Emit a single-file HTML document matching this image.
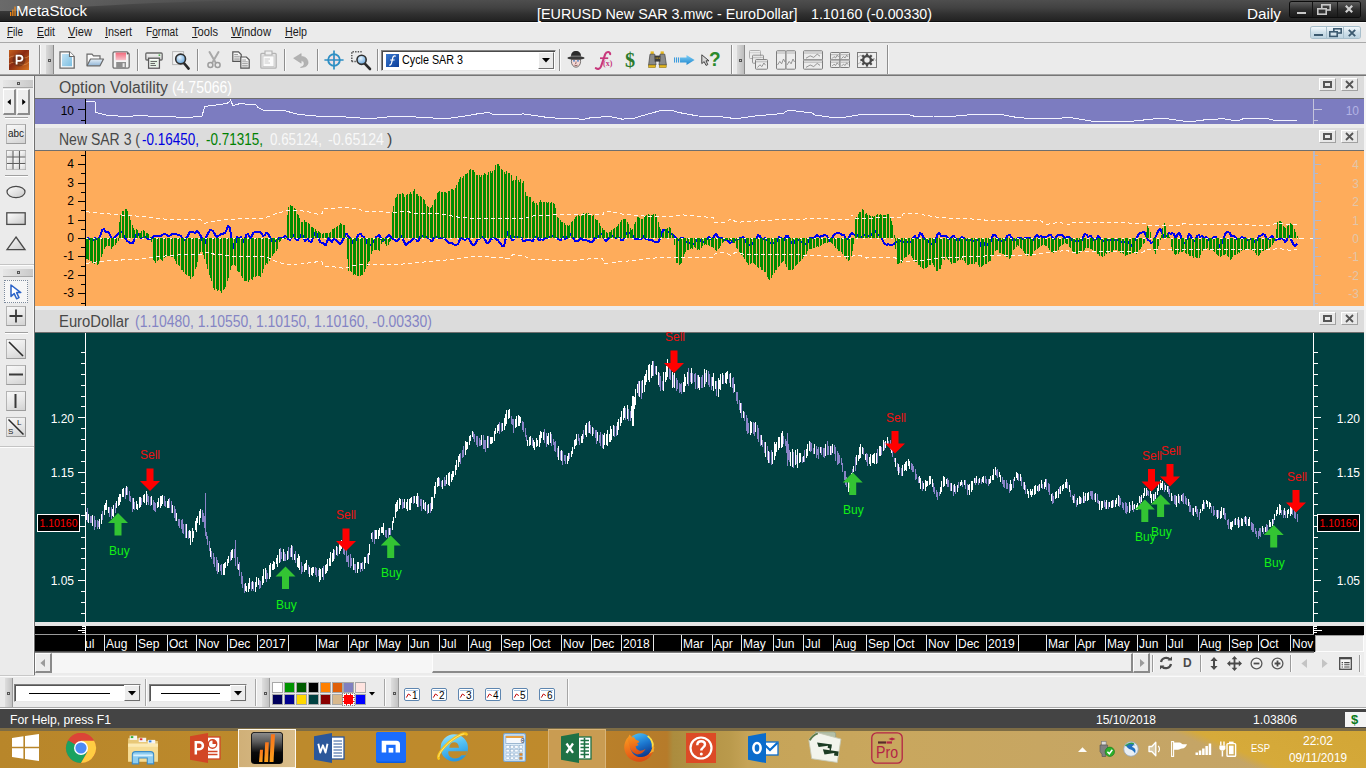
<!DOCTYPE html>
<html><head><meta charset="utf-8"><title>MetaStock</title><style>
html,body{margin:0;padding:0;background:#ebebeb;}
body{width:1366px;height:768px;overflow:hidden;position:relative;font-family:"Liberation Sans",sans-serif;}
.a{position:absolute;}
.t{position:absolute;white-space:nowrap;font-family:"Liberation Sans",sans-serif;}
svg{display:block;overflow:visible}
</style></head><body>
<!-- frame -->
<div class="a" style="left:0;top:0;width:1366px;height:22px;background:linear-gradient(#4e4e4e 0%,#424242 35%,#303030 65%,#202020 100%);"></div>
<svg class="a" style="left:0;top:0" width="260" height="14" viewBox="0 0 260 14"><defs><linearGradient id="gGloss" x1="0" y1="0" x2="1" y2="0"><stop offset="0" stop-color="#6a6a6a"/><stop offset="1" stop-color="#565656" stop-opacity="0.3"/></linearGradient></defs><path d="M0 0H250C150 2 60 8 14 11H0Z" fill="url(#gGloss)"/></svg>
<div class="a" style="left:0px;top:21px;width:1366px;height:1px;background:#0e0e0e;"></div>
<svg class="a" style="left:9.500px;top:6px" width="6" height="10" viewBox="0 0 6 10"><rect x="0" y="6" width="1.300" height="4" fill="#f08a1c"/><rect x="2.200" y="3.500" width="1.300" height="6.500" fill="#f08a1c"/><rect x="4.400" y="0.500" width="1.300" height="9.500" fill="#f08a1c"/></svg>
<div class="t" style="left:15.5px;top:1px;font-size:15.5px;line-height:20px;color:#fff;transform:scaleX(0.9696);transform-origin:0 0;">MetaStock</div>
<div class="t" style="left:537px;top:4px;font-size:15px;line-height:20px;color:#fff;transform:scaleX(0.9557);transform-origin:0 0;">[EURUSD New SAR 3.mwc - EuroDollar]</div>
<div class="t" style="left:811px;top:4px;font-size:15px;line-height:20px;color:#fff;transform:scaleX(0.9483);transform-origin:0 0;">1.10160 (-0.00330)</div>
<div class="t" style="left:1247px;top:4px;font-size:15px;line-height:20px;color:#fff;transform:scaleX(1.0198);transform-origin:0 0;">Daily</div>
<div class="a" style="left:1290px;top:2px;width:70px;height:15px;border-radius:2px;background:linear-gradient(#5a5a5a,#2c2c2c 55%,#1a1a1a);box-shadow:0 0 0 1px #0c0c0c"></div>
<div class="a" style="left:1312px;top:2px;width:1px;height:15px;background:#151515;"></div>
<div class="a" style="left:1337px;top:2px;width:1px;height:15px;background:#151515;"></div>
<div class="a" style="left:1297px;top:12px;width:9px;height:2px;background:#c8c8c8;"></div>
<svg class="a" style="left:1317px;top:4px" width="14" height="12" viewBox="0 0 14 12" fill="none" stroke="#c8c8c8" stroke-width="1.6"><rect x="4.8" y="0.8" width="8.4" height="5.2"/><rect x="0.8" y="4.8" width="8.4" height="5.4" fill="#333"/></svg>
<svg class="a" style="left:1345px;top:5px" width="8" height="8" viewBox="0 0 8 8" stroke="#d0d0d0" stroke-width="2.2"><path d="M0.800 0.800L7.200 7.200M7.200 0.800L0.800 7.200"/></svg>
<div class="a" style="left:0px;top:22px;width:1366px;height:21px;background:#ebebeb;"></div>
<div class="a" style="left:0px;top:22px;width:1366px;height:1px;background:#f8f8f8;"></div>
<div class="a" style="left:0px;top:42px;width:1366px;height:1px;background:#a9a9a9;"></div>
<div class="t" style="left:7px;top:25px;font-size:12px;line-height:15px;color:#1a1a1a;transform:scaleX(0.8274);transform-origin:0 0"><u>F</u>ile</div>
<div class="t" style="left:37px;top:25px;font-size:12px;line-height:15px;color:#1a1a1a;transform:scaleX(0.8705);transform-origin:0 0"><u>E</u>dit</div>
<div class="t" style="left:68px;top:25px;font-size:12px;line-height:15px;color:#1a1a1a;transform:scaleX(0.9304);transform-origin:0 0"><u>V</u>iew</div>
<div class="t" style="left:105px;top:25px;font-size:12px;line-height:15px;color:#1a1a1a;transform:scaleX(0.8996);transform-origin:0 0"><u>I</u>nsert</div>
<div class="t" style="left:146px;top:25px;font-size:12px;line-height:15px;color:#1a1a1a;transform:scaleX(0.8420);transform-origin:0 0">F<u>o</u>rmat</div>
<div class="t" style="left:192px;top:25px;font-size:12px;line-height:15px;color:#1a1a1a;transform:scaleX(0.9281);transform-origin:0 0"><u>T</u>ools</div>
<div class="t" style="left:231px;top:25px;font-size:12px;line-height:15px;color:#1a1a1a;transform:scaleX(0.9372);transform-origin:0 0"><u>W</u>indow</div>
<div class="t" style="left:285px;top:25px;font-size:12px;line-height:15px;color:#1a1a1a;transform:scaleX(0.8914);transform-origin:0 0"><u>H</u>elp</div>
<div class="a" style="left:1311px;top:27px;width:49px;height:11px;border-radius:2px;background:linear-gradient(#f4f9fc,#cfe0ea 50%,#bcd3e0);box-shadow:0 0 0 1px #a8bfcc"></div>
<div class="a" style="left:1326px;top:27px;width:1px;height:11px;background:#a8bfcc;"></div>
<div class="a" style="left:1343px;top:27px;width:1px;height:11px;background:#a8bfcc;"></div>
<div class="a" style="left:1314px;top:34px;width:9px;height:2px;background:#3c5a70;"></div>
<svg class="a" style="left:1329px;top:28px" width="13" height="10" viewBox="0 0 13 10" fill="none" stroke="#3c5a70" stroke-width="1.6"><rect x="4.8" y="0.8" width="7.4" height="4.2"/><rect x="0.8" y="3.8" width="7.4" height="4.6" fill="#d5e4ed"/></svg>
<svg class="a" style="left:1348px;top:29px" width="8" height="8" viewBox="0 0 8 8" stroke="#3c5a70" stroke-width="1.9"><path d="M0.8 0.8L7.2 7.2M7.2 0.8L0.8 7.2"/></svg>
<div class="a" style="left:0px;top:43px;width:1366px;height:32px;background:#ebebeb;"></div>
<div class="a" style="left:0px;top:74px;width:1366px;height:1px;background:#a4a4a4;"></div>
<div class="a" style="left:0px;top:75px;width:1366px;height:1px;background:#767676;"></div>
<!-- panes -->
<div class="a" style="left:35px;top:76px;width:1330px;height:600px;background:#e8e8e8;"></div>
<div class="a" style="left:34px;top:76px;width:1px;height:600px;background:#707070;"></div>
<div class="a" style="left:1364px;top:76px;width:2px;height:600px;background:#f4f4f4;"></div>
<div class="a" style="left:35px;top:76px;width:1329px;height:22px;background:#dcdcdc;"></div>
<div class="a" style="left:35px;top:98px;width:1329px;height:1px;background:#6e6e6e;"></div>
<div class="a" style="left:35px;top:99px;width:1329px;height:25px;background:#7c7cc0;"></div>
<div class="t" style="left:59px;top:77.5px;font-size:16px;line-height:19px;color:#484848;transform:scaleX(0.9884);transform-origin:0 0;">Option Volatility</div>
<div class="t" style="left:172px;top:77.5px;font-size:16px;line-height:19px;color:#ffffff;transform:scaleX(0.8760);transform-origin:0 0;">(4.75066)</div>
<div class="a" style="left:1319px;top:78px;width:17px;height:13px;background:#e8e8e8;border:1px solid #fff;border-right-color:#a0a0a0;border-bottom-color:#a0a0a0;box-sizing:border-box"></div><div class="a" style="left:1323px;top:81px;width:9px;height:7px;border:2px solid #555;box-sizing:border-box"></div><div class="a" style="left:1341px;top:78px;width:17px;height:13px;background:#e8e8e8;border:1px solid #fff;border-right-color:#a0a0a0;border-bottom-color:#a0a0a0;box-sizing:border-box"></div><svg class="a" style="left:1345px;top:80px" width="9" height="9" viewBox="0 0 9 9" stroke="#555" stroke-width="1.8"><path d="M1 1L8 8M8 1L1 8"/></svg>
<div class="a" style="left:35px;top:124px;width:1329px;height:4px;background:#ececec;"></div>
<div class="a" style="left:35px;top:128px;width:1329px;height:22px;background:#dcdcdc;"></div>
<div class="a" style="left:35px;top:150px;width:1329px;height:1px;background:#6e6e6e;"></div>
<div class="a" style="left:35px;top:151px;width:1329px;height:155px;background:#feac5b;"></div>
<div class="a" style="left:1319px;top:130px;width:17px;height:13px;background:#e8e8e8;border:1px solid #fff;border-right-color:#a0a0a0;border-bottom-color:#a0a0a0;box-sizing:border-box"></div><div class="a" style="left:1323px;top:133px;width:9px;height:7px;border:2px solid #555;box-sizing:border-box"></div><div class="a" style="left:1341px;top:130px;width:17px;height:13px;background:#e8e8e8;border:1px solid #fff;border-right-color:#a0a0a0;border-bottom-color:#a0a0a0;box-sizing:border-box"></div><svg class="a" style="left:1345px;top:132px" width="9" height="9" viewBox="0 0 9 9" stroke="#555" stroke-width="1.8"><path d="M1 1L8 8M8 1L1 8"/></svg>
<div class="a" style="left:35px;top:306px;width:1329px;height:4px;background:#ececec;"></div>
<div class="a" style="left:35px;top:310px;width:1329px;height:22px;background:#dcdcdc;"></div>
<div class="a" style="left:35px;top:332px;width:1329px;height:1px;background:#6e6e6e;"></div>
<div class="a" style="left:35px;top:333px;width:1329px;height:289px;background:#004040;"></div>
<div class="a" style="left:1319px;top:312px;width:17px;height:13px;background:#e8e8e8;border:1px solid #fff;border-right-color:#a0a0a0;border-bottom-color:#a0a0a0;box-sizing:border-box"></div><div class="a" style="left:1323px;top:315px;width:9px;height:7px;border:2px solid #555;box-sizing:border-box"></div><div class="a" style="left:1341px;top:312px;width:17px;height:13px;background:#e8e8e8;border:1px solid #fff;border-right-color:#a0a0a0;border-bottom-color:#a0a0a0;box-sizing:border-box"></div><svg class="a" style="left:1345px;top:314px" width="9" height="9" viewBox="0 0 9 9" stroke="#555" stroke-width="1.8"><path d="M1 1L8 8M8 1L1 8"/></svg>
<div class="a" style="left:35px;top:622px;width:1329px;height:4px;background:#e4e4e4;"></div>
<div class="a" style="left:35px;top:626px;width:1329px;height:26px;background:#000;"></div>
<div class="a" style="left:1315px;top:635px;width:49px;height:17px;box-sizing:border-box;background:#e9e9e9;border:1px solid #9c9c9c;border-right-color:#fdfdfd;border-bottom-color:#fdfdfd"></div>
<div class="a" style="left:35px;top:652px;width:1329px;height:24px;background:#ebebeb;"></div>
<!-- charts -->
<svg class="a" style="left:0;top:0" width="1366" height="768" shape-rendering="crispEdges">
<path d="M86.0 101.0L95.0 102.0L95.8 112.5L105.5 115.0L123.0 116.4L140.6 115.7L158.0 116.4L175.8 117.0L193.4 117.0L202.0 116.0L204.8 106.4L219.8 104.6L228.5 102.8L230.7 100.0L233.0 106.0L235.6 104.6L240.0 103.7L255.8 104.6L257.6 107.0L262.9 110.0L278.7 110.0L285.7 111.0L298.0 114.3L315.6 116.0L345.5 117.0L370.0 118.7L398.0 116.0L415.8 117.0L433.4 118.0L451.0 118.0L465.0 116.0L480.0 113.4L488.8 112.5L492.3 114.3L524.0 114.0L550.0 117.8L583.7 119.2L592.5 117.4L610.0 116.6L622.4 119.2L634.7 118.0L647.0 114.3L659.3 111.0L671.6 110.4L678.7 112.5L698.0 116.0L720.0 116.6L735.8 118.7L755.0 116.0L783.3 113.4L786.8 111.0L793.8 110.4L797.4 111.6L811.4 112.5L815.0 115.0L829.0 117.0L841.3 117.8L860.0 114.6L908.0 114.6L915.5 116.5L934.0 116.0L956.0 116.0L975.0 114.3L1000.7 114.3L1015.5 117.2L1034.0 119.0L1056.0 118.3L1071.0 117.6L1097.0 122.0L1108.0 121.0L1134.0 121.0L1156.0 118.7L1167.0 118.7L1189.6 122.0L1200.7 120.2L1223.0 118.7L1237.8 121.0L1245.0 118.0L1265.5 118.0L1274.8 120.5L1297.0 120.5" stroke="#f4f4ff" stroke-width="1" fill="none"/>
<path d="M86 240L87 240L88 238L90 239L91 241L92 241L94 239L95 238L97 239L98 240L99 238L101 234L102 230L104 229L105 231L106 232L108 232L109 233L111 237L112 239L113 239L115 237L116 236L118 234L119 233L120 231L122 232L123 234L125 238L126 239L127 241L129 242L130 243L132 243L133 243L134 240L136 235L137 233L139 235L140 237L141 238L143 238L144 237L146 237L147 238L148 239L150 239L151 239L153 237L154 236L155 236L157 236L158 236L160 236L161 236L162 235L164 234L165 234L167 235L168 236L169 236L171 235L172 234L174 234L175 234L176 234L178 235L179 235L181 236L182 238L183 240L185 240L186 238L188 236L189 233L190 232L192 232L193 232L195 233L196 232L197 231L199 233L200 235L202 238L203 243L204 246L206 238L207 235L209 232L210 230L211 230L213 231L214 233L216 236L217 237L218 236L220 235L221 234L223 234L224 233L225 233L227 229L228 226L230 228L231 235L232 241L234 248L235 245L237 237L238 238L239 238L241 237L242 239L244 242L245 240L246 235L248 234L249 236L251 238L252 236L253 233L255 232L256 232L258 232L259 232L260 232L262 234L263 236L265 235L266 233L267 233L269 235L270 238L272 241L273 242L274 242L276 241L277 240L279 238L280 238L281 238L283 238L284 237L285 236L287 237L288 239L290 240L291 237L292 235L294 235L295 238L297 240L298 240L299 238L301 235L302 235L304 238L305 241L306 240L308 239L309 241L311 242L312 241L313 236L315 233L316 233L318 236L319 239L320 242L322 243L323 243L325 245L326 245L327 241L329 238L330 240L332 242L333 240L334 239L336 240L337 241L339 243L340 244L341 243L343 240L344 237L346 234L347 234L348 236L350 238L351 240L353 243L354 244L355 242L357 238L358 235L360 234L361 234L362 236L364 237L365 239L367 242L368 245L369 246L371 245L372 243L374 241L375 239L376 237L378 236L379 235L381 238L382 241L383 241L385 240L386 238L388 236L389 235L390 236L392 238L393 239L395 240L396 241L397 241L399 239L400 237L402 236L403 239L404 242L406 245L407 244L409 242L410 242L411 241L413 239L414 238L416 239L417 241L418 241L420 238L421 235L423 236L424 236L425 236L427 237L428 238L430 239L431 241L432 241L434 238L435 237L437 237L438 237L439 238L441 238L442 238L444 238L445 239L446 240L448 242L449 243L451 243L452 243L453 244L455 245L456 245L458 244L459 242L460 239L462 238L463 239L465 240L466 239L467 238L469 239L470 241L472 244L473 245L474 245L476 243L477 240L479 239L480 238L481 237L483 237L484 237L485 240L487 243L488 243L490 241L491 238L492 239L494 238L495 238L497 240L498 240L499 242L501 244L502 246L504 246L505 242L506 237L508 232L509 234L511 238L512 240L513 240L515 237L516 236L518 237L519 236L520 237L522 239L523 241L525 241L526 240L527 240L529 240L530 240L532 241L533 241L534 238L536 237L537 237L539 240L540 240L541 239L543 240L544 239L546 238L547 238L548 238L550 237L551 236L553 236L554 235L555 237L557 238L558 239L560 240L561 240L562 238L564 237L565 239L567 238L568 235L569 233L571 234L572 237L574 239L575 241L576 241L578 241L579 240L581 238L582 239L583 240L585 240L586 240L588 241L589 241L590 242L592 242L593 241L595 238L596 238L597 238L599 236L600 235L602 234L603 235L604 238L606 241L607 240L609 238L610 236L611 235L613 236L614 237L616 238L617 237L618 237L620 238L621 240L623 240L624 238L625 235L627 233L628 233L630 233L631 233L632 235L634 237L635 239L637 239L638 239L639 239L641 239L642 238L644 236L645 238L646 239L648 239L649 240L651 240L652 240L653 241L655 242L656 242L658 242L659 241L660 238L662 233L663 230L665 230L666 232L667 233L669 232L670 233L672 234L673 235L674 236L676 238L677 239L679 240L680 239L681 238L683 238L684 240L685 243L687 242L688 242L690 243L691 244L692 245L694 244L695 242L697 240L698 239L699 239L701 241L702 242L704 242L705 241L706 240L708 238L709 237L711 239L712 240L713 238L715 235L716 234L718 237L719 238L720 238L722 238L723 239L725 240L726 240L727 240L729 242L730 243L732 242L733 239L734 239L736 240L737 240L739 239L740 238L741 238L743 237L744 238L746 241L747 244L748 245L750 245L751 245L753 244L754 241L755 239L757 238L758 235L760 236L761 239L762 240L764 239L765 238L767 239L768 242L769 243L771 243L772 243L774 243L775 243L776 242L778 240L779 237L781 238L782 240L783 241L785 239L786 236L788 236L789 239L790 241L792 243L793 244L795 242L796 239L797 239L799 240L800 242L802 242L803 242L804 243L806 244L807 243L809 240L810 238L811 238L813 238L814 238L816 236L817 235L818 236L820 237L821 236L823 236L824 235L825 235L827 236L828 238L830 241L831 241L832 238L834 235L835 234L837 233L838 233L839 233L841 234L842 235L844 235L845 237L846 239L848 239L849 237L851 234L852 233L853 234L855 235L856 234L858 236L859 237L860 237L862 237L863 235L865 235L866 236L867 236L869 236L870 236L872 234L873 232L874 231L876 231L877 234L879 235L880 235L881 237L883 241L884 243L885 244L887 245L888 244L890 245L891 245L892 245L894 244L895 243L897 242L898 240L899 240L901 241L902 242L904 242L905 241L906 241L908 242L909 242L911 242L912 241L913 238L915 236L916 238L918 238L919 236L920 233L922 234L923 237L925 239L926 239L927 240L929 242L930 244L932 244L933 243L934 243L936 240L937 235L939 233L940 234L941 236L943 236L944 236L946 236L947 237L948 238L950 239L951 238L953 236L954 236L955 238L957 240L958 241L960 239L961 238L962 237L964 238L965 240L967 240L968 239L969 239L971 240L972 241L974 241L975 242L976 241L978 240L979 242L981 245L982 248L983 247L985 243L986 243L988 245L989 246L990 243L992 238L993 235L995 235L996 236L997 238L999 240L1000 241L1002 241L1003 241L1004 241L1006 239L1007 236L1009 235L1010 235L1011 237L1013 240L1014 240L1016 240L1017 239L1018 238L1020 238L1021 238L1023 239L1024 239L1025 238L1027 238L1028 238L1030 238L1031 239L1032 240L1034 240L1035 237L1037 235L1038 236L1039 237L1041 236L1042 237L1044 237L1045 238L1046 237L1048 236L1049 235L1051 235L1052 237L1053 238L1055 239L1056 237L1058 235L1059 235L1060 235L1062 235L1063 236L1065 238L1066 239L1067 237L1069 237L1070 238L1072 239L1073 242L1074 242L1076 241L1077 240L1079 241L1080 242L1081 241L1083 238L1084 235L1085 234L1087 235L1088 237L1090 236L1091 236L1092 238L1094 240L1095 240L1097 238L1098 236L1099 237L1101 239L1102 240L1104 241L1105 242L1106 241L1108 240L1109 240L1111 240L1112 240L1113 240L1115 240L1116 241L1118 240L1119 240L1120 242L1122 242L1123 241L1125 242L1126 242L1127 241L1129 242L1130 246L1132 246L1133 243L1134 241L1136 239L1137 237L1139 234L1140 233L1141 233L1143 232L1144 232L1146 235L1147 238L1148 240L1150 241L1151 243L1153 242L1154 241L1155 238L1157 234L1158 231L1160 229L1161 230L1162 233L1164 237L1165 237L1167 236L1168 234L1169 233L1171 234L1172 233L1174 234L1175 237L1176 237L1178 234L1179 233L1181 236L1182 241L1183 243L1185 243L1186 241L1188 237L1189 234L1190 235L1192 238L1193 240L1195 241L1196 239L1197 236L1199 235L1200 237L1202 236L1203 237L1204 238L1206 237L1207 238L1209 240L1210 240L1211 239L1213 238L1214 237L1216 237L1217 239L1218 244L1220 247L1221 245L1223 241L1224 238L1225 234L1227 232L1228 232L1230 233L1231 236L1232 236L1234 236L1235 237L1237 239L1238 240L1239 239L1241 238L1242 237L1244 238L1245 238L1246 239L1248 240L1249 240L1251 239L1252 239L1253 240L1255 242L1256 241L1258 238L1259 236L1260 236L1262 235L1263 234L1265 235L1266 238L1267 239L1269 239L1270 238L1272 236L1273 237L1274 240L1276 240L1277 239L1279 239L1280 239L1281 238L1283 239L1284 240L1285 242L1287 240L1288 236L1290 236L1291 239L1292 242L1294 245L1295 246L1297 244" stroke="#0000f0" stroke-width="2" fill="none" stroke-linejoin="round"/><path d="M86.5 238V259M87.5 238V259M88.5 238V260M90.5 238V261M91.5 238V261M92.5 238V263M94.5 238V264M95.5 238V263M97.5 238V265M98.5 238V264M99.5 238V261M101.5 238V257M102.5 238V254M104.5 238V249M105.5 238V247M106.5 238V246M108.5 238V246M109.5 238V246M111.5 238V249M112.5 238V247M113.5 238V246M115.5 238V245M116.5 238V243M118.5 238V241M119.5 238V222M120.5 238V215M122.5 238V211M123.5 238V211M125.5 238V209M126.5 238V209M127.5 238V211M129.5 238V215M130.5 238V220M132.5 238V225M133.5 238V228M134.5 238V230M136.5 238V229M137.5 238V230M139.5 238V233M140.5 238V233M141.5 238V231M143.5 238V230M144.5 238V231M146.5 238V233M147.5 238V233M148.5 238V234M150.5 238V237M151.5 238V242M153.5 238V260M154.5 238V261M155.5 238V263M157.5 238V261M158.5 238V260M160.5 238V259M161.5 238V260M162.5 238V261M164.5 238V258M165.5 238V257M167.5 238V256M168.5 238V256M169.5 238V256M171.5 238V257M172.5 238V257M174.5 238V259M175.5 238V261M176.5 238V264M178.5 238V265M179.5 238V266M181.5 238V270M182.5 238V270M183.5 238V272M185.5 238V274M186.5 238V275M188.5 238V276M189.5 238V276M190.5 238V279M192.5 238V277M193.5 238V276M195.5 238V269M196.5 238V267M197.5 238V262M199.5 238V254M200.5 238V252M202.5 238V252M203.5 238V255M204.5 238V259M206.5 238V264M207.5 238V269M209.5 238V275M210.5 238V278M211.5 238V281M213.5 238V288M214.5 238V290M216.5 238V289M217.5 238V291M218.5 238V290M220.5 238V291M221.5 238V293M223.5 238V290M224.5 238V289M225.5 238V287M227.5 238V281M228.5 238V278M230.5 238V270M231.5 238V266M232.5 238V265M234.5 238V265M235.5 238V266M237.5 238V271M238.5 238V272M239.5 238V272M241.5 238V276M242.5 238V278M244.5 238V281M245.5 238V281M246.5 238V281M248.5 238V282M249.5 238V280M251.5 238V279M252.5 238V280M253.5 238V277M255.5 238V277M256.5 238V276M258.5 238V276M259.5 238V276M260.5 238V277M262.5 238V273M263.5 238V269M265.5 238V265M266.5 238V263M267.5 238V264M269.5 238V261M270.5 238V259M272.5 238V256M273.5 238V254M274.5 238V253M276.5 238V251M277.5 238V249M279.5 238V242M280.5 238V241M281.5 238V239M283.5 238V239M284.5 238V239M285.5 238V239M287.5 238V215M288.5 238V207M290.5 238V205M291.5 238V206M292.5 238V206M294.5 238V208M295.5 238V209M297.5 238V214M298.5 238V215M299.5 238V218M301.5 238V222M302.5 238V222M304.5 238V220M305.5 238V222M306.5 238V222M308.5 238V223M309.5 238V224M311.5 238V227M312.5 238V227M313.5 238V228M315.5 238V229M316.5 238V231M318.5 238V231M319.5 238V232M320.5 238V233M322.5 238V234M323.5 238V233M325.5 238V233M326.5 238V233M327.5 238V233M329.5 238V233M330.5 238V232M332.5 238V229M333.5 238V229M334.5 238V228M336.5 238V227M337.5 238V226M339.5 238V225M340.5 238V223M341.5 238V224M343.5 238V225M344.5 238V225M346.5 238V237M347.5 238V259M348.5 238V271M350.5 238V271M351.5 238V272M353.5 238V275M354.5 238V274M355.5 238V275M357.5 238V276M358.5 238V276M360.5 238V276M361.5 238V275M362.5 238V275M364.5 238V272M365.5 238V269M367.5 238V266M368.5 238V262M369.5 238V261M371.5 238V254M372.5 238V251M374.5 238V250M375.5 238V250M376.5 238V250M378.5 238V250M379.5 238V251M381.5 238V244M382.5 238V241M383.5 238V242M385.5 238V244M386.5 238V246M388.5 238V245M389.5 238V242M390.5 238V241M392.5 238V212M393.5 238V206M395.5 238V198M396.5 238V197M397.5 238V194M399.5 238V194M400.5 238V194M402.5 238V193M403.5 238V194M404.5 238V197M406.5 238V195M407.5 238V194M409.5 238V194M410.5 238V192M411.5 238V194M413.5 238V191M414.5 238V189M416.5 238V194M417.5 238V194M418.5 238V196M420.5 238V196M421.5 238V197M423.5 238V199M424.5 238V200M425.5 238V204M427.5 238V206M428.5 238V207M430.5 238V208M431.5 238V207M432.5 238V205M434.5 238V200M435.5 238V199M437.5 238V193M438.5 238V192M439.5 238V191M441.5 238V192M442.5 238V192M444.5 238V192M445.5 238V192M446.5 238V193M448.5 238V191M449.5 238V191M451.5 238V189M452.5 238V189M453.5 238V190M455.5 238V188M456.5 238V185M458.5 238V182M459.5 238V179M460.5 238V177M462.5 238V178M463.5 238V176M465.5 238V174M466.5 238V174M467.5 238V173M469.5 238V170M470.5 238V169M472.5 238V170M473.5 238V170M474.5 238V172M476.5 238V175M477.5 238V175M479.5 238V175M480.5 238V177M481.5 238V175M483.5 238V175M484.5 238V173M485.5 238V174M487.5 238V175M488.5 238V172M490.5 238V171M491.5 238V173M492.5 238V171M494.5 238V170M495.5 238V165M497.5 238V164M498.5 238V164M499.5 238V166M501.5 238V169M502.5 238V170M504.5 238V172M505.5 238V174M506.5 238V171M508.5 238V173M509.5 238V173M511.5 238V175M512.5 238V181M513.5 238V180M515.5 238V180M516.5 238V176M518.5 238V180M519.5 238V182M520.5 238V179M522.5 238V183M523.5 238V181M525.5 238V192M526.5 238V196M527.5 238V196M529.5 238V197M530.5 238V197M532.5 238V202M533.5 238V201M534.5 238V203M536.5 238V203M537.5 238V205M539.5 238V202M540.5 238V200M541.5 238V202M543.5 238V202M544.5 238V202M546.5 238V202M547.5 238V203M548.5 238V202M550.5 238V203M551.5 238V202M553.5 238V203M554.5 238V204M555.5 238V208M557.5 238V217M558.5 238V218M560.5 238V220M561.5 238V222M562.5 238V222M564.5 238V223M565.5 238V225M567.5 238V225M568.5 238V226M569.5 238V225M571.5 238V222M572.5 238V221M574.5 238V219M575.5 238V217M576.5 238V216M578.5 238V215M579.5 238V216M581.5 238V216M582.5 238V214M583.5 238V213M585.5 238V214M586.5 238V213M588.5 238V213M589.5 238V215M590.5 238V215M592.5 238V216M593.5 238V215M595.5 238V219M596.5 238V220M597.5 238V220M599.5 238V223M600.5 238V226M602.5 238V228M603.5 238V230M604.5 238V230M606.5 238V232M607.5 238V233M609.5 238V232M610.5 238V232M611.5 238V230M613.5 238V229M614.5 238V228M616.5 238V227M617.5 238V226M618.5 238V224M620.5 238V222M621.5 238V220M623.5 238V219M624.5 238V219M625.5 238V219M627.5 238V222M628.5 238V224M630.5 238V228M631.5 238V230M632.5 238V229M634.5 238V224M635.5 238V222M637.5 238V217M638.5 238V217M639.5 238V218M641.5 238V219M642.5 238V219M644.5 238V216M645.5 238V216M646.5 238V215M648.5 238V214M649.5 238V215M651.5 238V215M652.5 238V215M653.5 238V214M655.5 238V214M656.5 238V216M658.5 238V222M659.5 238V227M660.5 238V229M662.5 238V233M663.5 238V232M665.5 238V229M666.5 238V229M667.5 238V228M669.5 238V227M670.5 238V228M672.5 238V233M673.5 238V236M674.5 238V245M676.5 238V263M677.5 238V263M679.5 238V265M680.5 238V264M681.5 238V263M683.5 238V257M684.5 238V254M685.5 238V252M687.5 238V250M688.5 238V250M690.5 238V249M691.5 238V248M692.5 238V249M694.5 238V247M695.5 238V248M697.5 238V250M698.5 238V249M699.5 238V250M701.5 238V248M702.5 238V246M704.5 238V245M705.5 238V244M706.5 238V245M708.5 238V245M709.5 238V246M711.5 238V247M712.5 238V247M713.5 238V248M715.5 238V250M716.5 238V251M718.5 238V249M719.5 238V248M720.5 238V246M722.5 238V243M723.5 238V242M725.5 238V241M726.5 238V240M727.5 238V240M729.5 238V241M730.5 238V241M732.5 238V242M733.5 238V243M734.5 238V243M736.5 238V248M737.5 238V249M739.5 238V252M740.5 238V253M741.5 238V255M743.5 238V257M744.5 238V259M746.5 238V262M747.5 238V263M748.5 238V265M750.5 238V264M751.5 238V263M753.5 238V263M754.5 238V264M755.5 238V265M757.5 238V267M758.5 238V268M760.5 238V267M761.5 238V270M762.5 238V270M764.5 238V272M765.5 238V272M767.5 238V277M768.5 238V279M769.5 238V280M771.5 238V278M772.5 238V275M774.5 238V273M775.5 238V270M776.5 238V270M778.5 238V267M779.5 238V266M781.5 238V263M782.5 238V262M783.5 238V261M785.5 238V264M786.5 238V267M788.5 238V270M789.5 238V270M790.5 238V270M792.5 238V270M793.5 238V269M795.5 238V266M796.5 238V265M797.5 238V264M799.5 238V262M800.5 238V261M802.5 238V259M803.5 238V257M804.5 238V255M806.5 238V254M807.5 238V251M809.5 238V249M810.5 238V249M811.5 238V249M813.5 238V248M814.5 238V248M816.5 238V247M817.5 238V246M818.5 238V247M820.5 238V246M821.5 238V245M823.5 238V244M824.5 238V243M825.5 238V243M827.5 238V243M828.5 238V242M830.5 238V242M831.5 238V243M832.5 238V244M834.5 238V246M835.5 238V248M837.5 238V249M838.5 238V251M839.5 238V251M841.5 238V252M842.5 238V254M844.5 238V256M845.5 238V257M846.5 238V259M848.5 238V261M849.5 238V260M851.5 238V256M852.5 238V251M853.5 238V244M855.5 238V218M856.5 238V217M858.5 238V214M859.5 238V212M860.5 238V212M862.5 238V209M863.5 238V210M865.5 238V214M866.5 238V213M867.5 238V215M869.5 238V215M870.5 238V216M872.5 238V216M873.5 238V217M874.5 238V216M876.5 238V215M877.5 238V214M879.5 238V215M880.5 238V214M881.5 238V215M883.5 238V215M884.5 238V215M885.5 238V215M887.5 238V214M888.5 238V214M890.5 238V218M891.5 238V221M892.5 238V225M894.5 238V235M895.5 238V249M897.5 238V264M898.5 238V264M899.5 238V263M901.5 238V263M902.5 238V262M904.5 238V258M905.5 238V257M906.5 238V257M908.5 238V255M909.5 238V254M911.5 238V256M912.5 238V258M913.5 238V260M915.5 238V262M916.5 238V262M918.5 238V265M919.5 238V265M920.5 238V267M922.5 238V268M923.5 238V269M925.5 238V268M926.5 238V268M927.5 238V267M929.5 238V265M930.5 238V265M932.5 238V263M933.5 238V265M934.5 238V267M936.5 238V271M937.5 238V271M939.5 238V269M940.5 238V269M941.5 238V265M943.5 238V259M944.5 238V260M946.5 238V257M947.5 238V259M948.5 238V260M950.5 238V262M951.5 238V264M953.5 238V263M954.5 238V263M955.5 238V263M957.5 238V261M958.5 238V260M960.5 238V260M961.5 238V258M962.5 238V260M964.5 238V261M965.5 238V263M967.5 238V265M968.5 238V265M969.5 238V264M971.5 238V264M972.5 238V264M974.5 238V264M975.5 238V262M976.5 238V262M978.5 238V265M979.5 238V267M981.5 238V267M982.5 238V266M983.5 238V265M985.5 238V264M986.5 238V264M988.5 238V262M989.5 238V261M990.5 238V261M992.5 238V256M993.5 238V255M995.5 238V251M996.5 238V250M997.5 238V250M999.5 238V253M1000.5 238V253M1002.5 238V254M1003.5 238V254M1004.5 238V256M1006.5 238V257M1007.5 238V257M1009.5 238V259M1010.5 238V258M1011.5 238V255M1013.5 238V250M1014.5 238V249M1016.5 238V247M1017.5 238V245M1018.5 238V246M1020.5 238V248M1021.5 238V249M1023.5 238V251M1024.5 238V253M1025.5 238V254M1027.5 238V256M1028.5 238V255M1030.5 238V256M1031.5 238V256M1032.5 238V255M1034.5 238V251M1035.5 238V250M1037.5 238V249M1038.5 238V248M1039.5 238V247M1041.5 238V246M1042.5 238V245M1044.5 238V245M1045.5 238V246M1046.5 238V246M1048.5 238V248M1049.5 238V250M1051.5 238V252M1052.5 238V252M1053.5 238V253M1055.5 238V252M1056.5 238V252M1058.5 238V250M1059.5 238V247M1060.5 238V246M1062.5 238V245M1063.5 238V244M1065.5 238V243M1066.5 238V244M1067.5 238V244M1069.5 238V247M1070.5 238V248M1072.5 238V251M1073.5 238V252M1074.5 238V252M1076.5 238V254M1077.5 238V254M1079.5 238V253M1080.5 238V252M1081.5 238V251M1083.5 238V251M1084.5 238V250M1085.5 238V248M1087.5 238V248M1088.5 238V248M1090.5 238V249M1091.5 238V249M1092.5 238V250M1094.5 238V251M1095.5 238V252M1097.5 238V254M1098.5 238V254M1099.5 238V256M1101.5 238V256M1102.5 238V257M1104.5 238V256M1105.5 238V253M1106.5 238V254M1108.5 238V252M1109.5 238V253M1111.5 238V252M1112.5 238V252M1113.5 238V250M1115.5 238V250M1116.5 238V250M1118.5 238V251M1119.5 238V251M1120.5 238V253M1122.5 238V253M1123.5 238V254M1125.5 238V256M1126.5 238V255M1127.5 238V255M1129.5 238V254M1130.5 238V254M1132.5 238V253M1133.5 238V253M1134.5 238V253M1136.5 238V254M1137.5 238V252M1139.5 238V250M1140.5 238V249M1141.5 238V247M1143.5 238V244M1144.5 238V243M1146.5 238V232M1147.5 238V226M1148.5 238V228M1150.5 238V232M1151.5 238V239M1153.5 238V249M1154.5 238V251M1155.5 238V254M1157.5 238V249M1158.5 238V246M1160.5 238V240M1161.5 238V235M1162.5 238V228M1164.5 238V223M1165.5 238V226M1167.5 238V233M1168.5 238V235M1169.5 238V237M1171.5 238V247M1172.5 238V251M1174.5 238V254M1175.5 238V255M1176.5 238V254M1178.5 238V254M1179.5 238V252M1181.5 238V252M1182.5 238V252M1183.5 238V251M1185.5 238V253M1186.5 238V254M1188.5 238V254M1189.5 238V256M1190.5 238V256M1192.5 238V256M1193.5 238V258M1195.5 238V257M1196.5 238V258M1197.5 238V258M1199.5 238V258M1200.5 238V255M1202.5 238V251M1203.5 238V250M1204.5 238V250M1206.5 238V249M1207.5 238V248M1209.5 238V250M1210.5 238V250M1211.5 238V250M1213.5 238V251M1214.5 238V252M1216.5 238V254M1217.5 238V255M1218.5 238V256M1220.5 238V257M1221.5 238V256M1223.5 238V255M1224.5 238V255M1225.5 238V254M1227.5 238V256M1228.5 238V257M1230.5 238V260M1231.5 238V259M1232.5 238V257M1234.5 238V255M1235.5 238V255M1237.5 238V254M1238.5 238V252M1239.5 238V253M1241.5 238V251M1242.5 238V250M1244.5 238V250M1245.5 238V250M1246.5 238V250M1248.5 238V250M1249.5 238V249M1251.5 238V250M1252.5 238V250M1253.5 238V251M1255.5 238V253M1256.5 238V255M1258.5 238V256M1259.5 238V255M1260.5 238V253M1262.5 238V251M1263.5 238V251M1265.5 238V250M1266.5 238V250M1267.5 238V250M1269.5 238V248M1270.5 238V247M1272.5 238V245M1273.5 238V243M1274.5 238V241M1276.5 238V229M1277.5 238V222M1279.5 238V221M1280.5 238V221M1281.5 238V222M1283.5 238V226M1284.5 238V227M1285.5 238V228M1287.5 238V226M1288.5 238V225M1290.5 238V223M1291.5 238V224M1292.5 238V225M1294.5 238V229M1295.5 238V232M1297.5 238V236" stroke="#008c00" stroke-width="1" fill="none"/><path d="M86 238.5H1298" stroke="#fff8ee" stroke-width="1" stroke-dasharray="2 5"/><path d="M86.4 211.8L116.6 214.6L134.9 215.9L153.2 217.7L171.5 219.9L200.8 219.9L204.5 223.2L215.4 221.3L222.8 219.5L263.0 218.2L270.3 215.9L277.7 213.1L286.8 210.9L299.6 210.4L310.6 212.2L318.8 214.4L322.5 213.1L323.4 208.5L330.0 208.5L342.8 207.2L359.3 209.4L366.6 211.6L390.4 212.2L408.7 211.8L416.0 213.7L439.8 214.0L458.1 217.1L472.8 218.6L522.2 219.0L533.1 215.9L555.1 214.9L579.8 214.4L580.9 214.9L602.9 214.9L603.8 211.6L611.1 211.6L622.1 214.0L653.2 216.8L671.5 216.8L682.5 214.9L713.6 217.7L714.5 222.3L726.4 222.3L730.1 219.0L737.4 222.3L763.0 220.4L829.8 218.2L830.9 219.0L848.3 219.0L852.0 214.9L854.7 218.2L902.3 217.7L903.2 213.1L917.8 214.0L939.8 217.7L967.3 218.6L985.6 220.1L1040.5 220.4L1046.0 224.5L1058.8 222.3L1067.9 224.1L1070.0 225.0L1071.8 222.3L1145.0 223.2L1146.9 225.4L1179.8 225.9L1183.5 223.2L1190.8 224.5L1249.4 225.0L1271.3 225.0L1276.8 223.2L1296.9 225.0" stroke="#fff8ee" stroke-width="1" fill="none" stroke-dasharray="4 3"/><path d="M86.4 263.4L98.3 261.6L116.6 260.3L140.4 258.9L151.4 257.6L171.5 255.2L200.8 254.3L208.1 252.1L215.4 254.7L226.4 255.2L235.6 256.7L266.7 257.0L274.0 260.7L281.3 263.1L292.3 265.3L308.8 262.9L321.6 261.2L323.4 266.2L330.0 266.2L344.6 268.4L353.8 265.3L366.6 264.0L403.2 264.0L428.8 261.6L458.1 258.9L476.4 256.1L509.4 258.3L513.0 254.7L524.0 256.1L531.3 259.8L579.8 260.3L580.9 259.4L602.0 258.3L604.7 263.4L634.9 260.3L658.7 257.6L713.6 258.0L715.4 253.4L724.6 252.5L730.1 255.2L735.6 252.5L744.7 254.3L799.6 254.8L829.8 256.5L830.9 257.0L852.0 256.1L859.3 255.2L866.6 258.0L894.1 257.4L903.2 261.6L921.5 260.3L939.8 258.0L994.7 255.6L1031.3 254.8L1049.6 252.5L1067.9 250.1L1070.0 253.4L1079.2 251.5L1143.2 252.1L1146.9 249.3L1271.3 249.7L1278.6 248.4L1289.6 250.3L1296.9 249.7" stroke="#fff8ee" stroke-width="1" fill="none" stroke-dasharray="4 3"/><path d="M1299 238.5H1304M1310 238.5H1313" stroke="#fff8ee" stroke-width="1"/>
<path d="M87.5 508V522M90.5 516V523M91.5 516V523M94.5 516V530M95.5 520V527M97.5 520V529M98.5 521V527M102.5 511V520M109.5 507V517M111.5 507V519M115.5 503V513M125.5 488V499M127.5 487V495M129.5 491V501M130.5 496V502M132.5 498V512M134.5 502V510M141.5 498V505M147.5 494V502M148.5 496V505M150.5 497V506M153.5 500V510M154.5 502V511M155.5 503V512M164.5 496V506M165.5 501V507M169.5 498V508M171.5 501V513M174.5 506V518M175.5 509V521M178.5 519V526M179.5 519V528M181.5 520V529M182.5 519V533M183.5 524V534M185.5 524V538M188.5 531V539M202.5 510V522M203.5 513V522M204.5 516V528M206.5 532V539M207.5 536V545M209.5 541V551M211.5 551V559M213.5 553V564M214.5 557V567M216.5 557V571M217.5 560V574M220.5 565V571M221.5 564V575M230.5 552V561M234.5 549V558M235.5 551V560M237.5 557V569M239.5 562V576M241.5 572V584M242.5 576V588M244.5 584V593M251.5 582V591M253.5 582V591M259.5 580V589M260.5 581V588M266.5 570V582M267.5 573V579M280.5 548V562M281.5 552V559M284.5 552V561M285.5 554V561M288.5 547V559M290.5 548V557M292.5 546V560M295.5 551V563M301.5 562V574M302.5 566V572M308.5 565V574M315.5 567V575M316.5 568V577M318.5 570V576M323.5 566V580M334.5 550V559M337.5 547V556M343.5 540V554M344.5 548V555M346.5 550V562M347.5 556V562M348.5 555V567M350.5 554V568M351.5 558V566M354.5 564V570M355.5 564V573M360.5 563V572M362.5 562V571M367.5 554V563M372.5 532V542M374.5 530V544M385.5 530V537M386.5 530V538M388.5 528V539M390.5 528V535M402.5 499V509M403.5 502V508M413.5 496V504M418.5 496V507M420.5 499V506M421.5 499V511M424.5 503V510M427.5 505V514M430.5 503V513M439.5 478V486M441.5 481V487M444.5 477V486M445.5 480V486M460.5 453V464M462.5 450V458M463.5 446V457M473.5 432V439M474.5 434V442M476.5 436V445M477.5 436V447M479.5 438V446M480.5 440V446M483.5 435V449M484.5 440V449M485.5 440V452M488.5 436V448M499.5 422V434M501.5 423V432M511.5 416V424M512.5 419V425M513.5 419V433M522.5 421V430M523.5 422V432M525.5 428V437M526.5 435V441M532.5 438V446M544.5 429V443M546.5 433V447M551.5 434V446M553.5 439V445M554.5 442V451M555.5 441V452M557.5 448V457M560.5 451V460M562.5 451V465M564.5 455V461M565.5 455V464M569.5 453V459M578.5 434V441M579.5 438V445M583.5 430V439M588.5 422V433M590.5 425V434M593.5 428V434M595.5 430V438M596.5 430V444M599.5 435V443M600.5 432V446M602.5 434V448M614.5 426V437M616.5 426V436M625.5 408V420M628.5 409V421M630.5 411V421M638.5 381V396M641.5 381V399M653.5 361V376M655.5 366V374M659.5 373V387M660.5 376V391M662.5 381V390M669.5 363V379M670.5 366V380M673.5 375V387M676.5 378V391M677.5 380V389M679.5 383V393M680.5 384V392M681.5 383V394M688.5 368V386M690.5 373V382M692.5 373V383M694.5 374V382M695.5 373V389M697.5 375V389M701.5 377V388M702.5 375V388M705.5 373V384M708.5 371V385M709.5 374V387M711.5 377V390M716.5 381V396M723.5 375V384M729.5 374V383M732.5 378V388M733.5 377V393M736.5 392V401M737.5 392V404M739.5 400V410M741.5 403V418M744.5 412V421M746.5 415V431M747.5 418V434M748.5 423V433M753.5 422V434M754.5 423V436M757.5 425V439M758.5 428V442M760.5 435V446M762.5 440V447M764.5 442V453M767.5 446V460M769.5 452V463M771.5 450V465M783.5 436V444M785.5 439V446M786.5 441V453M788.5 444V460M789.5 450V462M793.5 452V468M796.5 455V464M802.5 457V463M804.5 450V462M810.5 442V452M811.5 443V451M813.5 448V454M816.5 446V458M817.5 449V455M818.5 447V459M821.5 447V455M823.5 448V457M824.5 448V458M827.5 441V455M828.5 446V455M831.5 446V455M834.5 445V454M835.5 447V461M837.5 451V465M838.5 453V464M839.5 455V463M841.5 458V465M842.5 463V472M844.5 471V480M845.5 471V485M846.5 477V487M852.5 469V479M855.5 457V471M863.5 448V455M866.5 453V462M867.5 454V466M877.5 449V463M881.5 447V455M884.5 442V450M888.5 441V445M890.5 440V450M892.5 450V457M894.5 458V462M897.5 463V471M899.5 467V473M901.5 468V476M911.5 463V470M912.5 464V472M913.5 466V472M915.5 469V480M916.5 474V479M918.5 477V483M922.5 481V491M933.5 483V492M934.5 487V494M936.5 490V497M937.5 492V500M939.5 492V496M947.5 478V487M948.5 480V487M950.5 483V491M953.5 485V496M955.5 486V494M958.5 482V488M962.5 482V487M965.5 480V489M967.5 484V495M975.5 478V485M978.5 479V485M981.5 479V484M985.5 476V483M986.5 479V484M988.5 479V486M996.5 470V476M997.5 469V478M1002.5 477V484M1003.5 480V487M1004.5 480V488M1006.5 480V489M1007.5 483V489M1009.5 484V493M1013.5 479V488M1018.5 474V481M1021.5 477V486M1023.5 482V489M1025.5 485V494M1038.5 485V492M1042.5 484V489M1046.5 479V490M1048.5 483V492M1049.5 484V495M1052.5 493V504M1053.5 496V503M1059.5 487V494M1067.5 482V489M1070.5 490V497M1072.5 495V500M1074.5 494V503M1076.5 500V507M1081.5 498V503M1084.5 496V503M1090.5 491V496M1091.5 491V499M1092.5 491V500M1094.5 494V500M1097.5 494V503M1098.5 500V504M1104.5 500V507M1105.5 502V509M1108.5 502V509M1113.5 500V507M1119.5 496V507M1120.5 498V505M1122.5 502V508M1123.5 503V510M1125.5 502V513M1126.5 503V514M1127.5 506V512M1130.5 505V511M1133.5 505V512M1140.5 497V504M1147.5 490V495M1148.5 491V496M1154.5 494V501M1164.5 483V492M1168.5 486V494M1169.5 489V497M1172.5 496V501M1174.5 495V504M1175.5 495V505M1179.5 496V504M1182.5 494V502M1183.5 493V504M1185.5 496V504M1186.5 498V505M1189.5 502V512M1190.5 505V512M1192.5 508V515M1196.5 506V514M1197.5 509V517M1199.5 512V520M1204.5 502V509M1211.5 506V513M1213.5 506V516M1214.5 510V515M1216.5 510V517M1218.5 510V518M1224.5 508V519M1225.5 513V520M1227.5 520V525M1228.5 519V529M1234.5 519V525M1237.5 519V525M1239.5 520V527M1244.5 517V522M1246.5 517V526M1251.5 522V530M1252.5 523V532M1253.5 524V532M1255.5 528V534M1256.5 531V537M1258.5 531V539M1259.5 528V536M1260.5 528V537M1263.5 528V534M1266.5 524V532M1267.5 525V533M1273.5 519V524M1281.5 510V515M1283.5 510V518M1285.5 511V518M1292.5 506V515M1294.5 509V518M1295.5 512V519M1297.5 514V522M205.5 493V536M235.5 540V566M787.5 433V466" stroke="#8a84c8" stroke-width="1" fill="none"/><path d="M86.5 512V520M88.5 514V523M92.5 515V526M99.5 519V529M101.5 514V524M104.5 505V515M105.5 503V510M106.5 500V510M108.5 507V513M112.5 509V516M113.5 505V517M116.5 501V508M118.5 497V506M119.5 494V505M120.5 494V502M122.5 489V497M123.5 488V497M126.5 486V495M133.5 498V509M136.5 501V509M137.5 504V510M139.5 497V508M140.5 497V507M143.5 495V502M144.5 494V503M146.5 491V505M151.5 496V505M157.5 502V508M158.5 498V507M160.5 496V508M161.5 496V506M162.5 495V504M167.5 501V508M168.5 499V508M172.5 505V513M176.5 513V521M186.5 524V538M189.5 530V538M190.5 531V545M192.5 528V542M193.5 531V538M195.5 521V530M196.5 518V532M197.5 516V523M199.5 511V525M200.5 509V518M210.5 548V557M218.5 563V572M223.5 564V575M224.5 563V575M225.5 562V568M227.5 559V566M228.5 556V563M231.5 550V560M232.5 549V558M238.5 564V570M245.5 583V591M246.5 586V592M248.5 583V592M249.5 578V589M252.5 581V589M255.5 582V592M256.5 577V587M258.5 578V585M262.5 576V585M263.5 569V583M265.5 568V579M269.5 565V579M270.5 563V577M272.5 564V570M273.5 561V570M274.5 562V569M276.5 558V564M277.5 555V567M279.5 549V563M283.5 549V561M287.5 551V560M291.5 545V557M294.5 554V560M297.5 558V567M298.5 554V568M299.5 556V570M304.5 564V572M305.5 563V570M306.5 560V570M309.5 567V577M311.5 568V575M312.5 567V576M313.5 567V573M319.5 568V582M320.5 569V580M322.5 568V577M325.5 565V574M326.5 564V573M327.5 559V571M329.5 558V566M330.5 552V566M332.5 553V562M333.5 549V561M336.5 546V555M339.5 543V554M340.5 542V551M341.5 540V549M353.5 558V570M357.5 562V573M358.5 562V569M361.5 563V569M364.5 557V569M365.5 557V563M368.5 553V564M369.5 544V555M371.5 533V539M375.5 530V539M376.5 530V539M378.5 530V539M379.5 528V536M381.5 527V533M382.5 527V533M383.5 523V535M389.5 528V535M392.5 521V530M393.5 517V523M395.5 504V518M396.5 502V512M397.5 500V511M399.5 498V509M400.5 499V505M404.5 499V508M406.5 502V509M407.5 499V511M409.5 499V510M410.5 498V510M411.5 497V503M414.5 496V503M416.5 496V504M417.5 493V507M423.5 500V509M425.5 502V511M428.5 504V513M431.5 497V511M432.5 497V509M434.5 486V498M435.5 482V494M437.5 478V487M438.5 477V486M442.5 480V489M446.5 475V484M448.5 473V485M449.5 472V486M451.5 474V482M452.5 471V480M453.5 471V477M455.5 465V475M456.5 460V470M458.5 456V467M459.5 454V462M465.5 441V455M466.5 442V450M467.5 442V449M469.5 436V445M470.5 435V441M472.5 431V437M481.5 435V445M487.5 436V448M490.5 437V444M491.5 437V444M492.5 437V443M494.5 431V441M495.5 428V434M497.5 425V433M498.5 424V431M502.5 423V431M504.5 418V430M505.5 414V426M506.5 410V424M508.5 410V419M509.5 409V418M515.5 419V428M516.5 416V427M518.5 415V426M519.5 416V426M520.5 417V423M527.5 440V446M529.5 437V446M530.5 436V445M533.5 440V448M534.5 442V450M536.5 438V447M537.5 440V446M539.5 435V447M540.5 431V443M541.5 432V438M543.5 432V440M547.5 436V444M548.5 433V445M550.5 432V443M558.5 446V460M561.5 450V461M567.5 456V464M568.5 453V461M571.5 451V457M572.5 447V454M574.5 440V449M575.5 439V446M576.5 434V445M581.5 436V443M582.5 434V443M585.5 425V435M586.5 423V437M589.5 421V433M592.5 427V436M597.5 432V441M603.5 435V449M604.5 433V445M606.5 434V445M607.5 430V446M609.5 434V442M610.5 426V442M611.5 429V440M613.5 425V436M617.5 422V435M618.5 419V430M620.5 417V426M621.5 411V423M623.5 408V420M624.5 406V418M627.5 405V419M631.5 406V418M632.5 404V418M634.5 397V409M635.5 389V405M637.5 384V393M639.5 381V397M642.5 380V393M644.5 376V392M645.5 374V385M646.5 370V382M648.5 365V380M649.5 364V382M651.5 365V378M652.5 361V376M656.5 366V375M658.5 372V385M663.5 372V391M665.5 372V382M666.5 366V380M667.5 359V377M672.5 372V388M674.5 373V388M683.5 382V392M684.5 374V392M685.5 377V386M687.5 372V384M691.5 368V384M698.5 375V388M699.5 377V390M704.5 369V387M706.5 370V382M712.5 377V386M713.5 373V391M715.5 381V389M718.5 378V397M719.5 380V389M720.5 374V390M722.5 373V384M725.5 373V383M726.5 372V384M727.5 371V379M730.5 373V387M734.5 384V392M740.5 403V413M743.5 411V418M750.5 421V435M751.5 422V433M755.5 422V432M761.5 435V445M765.5 442V457M768.5 451V463M772.5 452V464M774.5 442V460M775.5 444V456M776.5 442V452M778.5 437V450M779.5 437V448M781.5 433V448M782.5 431V447M790.5 452V466M792.5 449V467M795.5 450V465M797.5 449V468M799.5 453V463M800.5 453V462M803.5 456V462M806.5 449V458M807.5 444V456M809.5 441V451M814.5 444V454M820.5 447V453M825.5 444V456M830.5 446V455M832.5 444V453M848.5 480V492M849.5 476V488M851.5 473V482M853.5 466V472M856.5 455V465M858.5 455V461M859.5 447V459M860.5 444V458M862.5 447V454M865.5 454V460M869.5 457V464M870.5 454V466M872.5 455V463M873.5 454V463M874.5 453V464M876.5 453V464M879.5 446V456M880.5 446V456M883.5 440V451M885.5 441V448M887.5 437V445M891.5 448V453M895.5 458V467M898.5 464V475M902.5 465V476M904.5 464V471M905.5 462V470M906.5 461V471M908.5 459V466M909.5 461V469M919.5 476V483M920.5 478V489M923.5 483V489M925.5 480V491M926.5 481V487M927.5 481V486M929.5 476V485M930.5 476V484M932.5 479V487M940.5 487V494M941.5 481V492M943.5 476V487M944.5 477V486M946.5 479V484M951.5 483V491M954.5 484V492M957.5 485V492M960.5 482V486M961.5 480V485M964.5 480V485M968.5 485V490M969.5 484V495M971.5 481V492M972.5 481V490M974.5 478V483M976.5 476V483M979.5 478V483M982.5 477V482M983.5 476V483M989.5 479V484M990.5 476V483M992.5 475V480M993.5 469V480M995.5 467V475M999.5 472V477M1000.5 475V482M1010.5 480V491M1011.5 484V490M1014.5 477V481M1016.5 472V478M1017.5 473V480M1020.5 474V481M1024.5 482V490M1027.5 489V494M1028.5 491V498M1030.5 489V495M1031.5 491V497M1032.5 489V495M1034.5 486V495M1035.5 485V494M1037.5 486V491M1039.5 484V491M1041.5 480V488M1044.5 482V489M1045.5 479V487M1051.5 494V501M1055.5 492V499M1056.5 491V498M1058.5 489V498M1060.5 486V494M1062.5 485V491M1063.5 484V489M1065.5 482V488M1066.5 479V488M1069.5 485V492M1073.5 496V503M1077.5 498V505M1079.5 496V504M1080.5 497V504M1083.5 492V503M1085.5 493V501M1087.5 493V501M1088.5 492V500M1095.5 493V502M1099.5 501V510M1101.5 501V510M1102.5 501V508M1106.5 500V509M1109.5 502V507M1111.5 501V508M1112.5 500V508M1115.5 500V507M1116.5 498V504M1118.5 495V506M1129.5 502V513M1132.5 501V510M1134.5 504V509M1136.5 505V510M1137.5 503V510M1139.5 496V503M1141.5 495V502M1143.5 493V498M1144.5 488V496M1146.5 488V496M1150.5 491V498M1151.5 494V503M1153.5 494V501M1155.5 492V499M1157.5 488V495M1158.5 483V491M1160.5 480V490M1161.5 483V488M1162.5 481V490M1165.5 485V490M1167.5 486V492M1171.5 493V501M1176.5 496V507M1178.5 494V503M1181.5 495V501M1188.5 499V506M1193.5 508V516M1195.5 506V512M1200.5 509V513M1202.5 504V511M1203.5 500V509M1206.5 500V504M1207.5 501V507M1209.5 502V509M1210.5 503V507M1217.5 510V519M1220.5 511V519M1221.5 507V518M1223.5 508V515M1230.5 522V529M1231.5 522V530M1232.5 521V527M1235.5 518V525M1238.5 517V528M1241.5 518V526M1242.5 519V526M1245.5 516V524M1248.5 519V526M1249.5 517V526M1262.5 526V532M1265.5 527V532M1269.5 520V527M1270.5 522V527M1272.5 519V526M1274.5 514V520M1276.5 510V516M1277.5 507V514M1279.5 504V515M1280.5 505V513M1284.5 508V515M1287.5 510V518M1288.5 509V514M1290.5 505V516M1291.5 507V514M632.5 396V426M633.5 396V426" stroke="#ffffff" stroke-width="1" fill="none"/>
<g shape-rendering="auto">
<path d="M118 513L128 523H121.5V535.5H114.5V523H108Z" fill="#33c433"/>
<path d="M285.5 566.5L295.5 576.5H289.0V589.0H282.0V576.5H275.5Z" fill="#33c433"/>
<path d="M390.7 535.5L400.7 545.5H394.2V558.0H387.2V545.5H380.7Z" fill="#33c433"/>
<path d="M852.7 472.5L862.7 482.5H856.2V495.0H849.2V482.5H842.7Z" fill="#33c433"/>
<path d="M1144.8 499.5L1154.8 509.5H1148.3V522.0H1141.3V509.5H1134.8Z" fill="#33c433"/>
<path d="M1160.6 494.5L1170.6 504.5H1164.1V517.0H1157.1V504.5H1150.6Z" fill="#33c433"/>
<path d="M1273.7 525L1283.7 535H1277.2V547.5H1270.2V535H1263.7Z" fill="#33c433"/>
<path d="M150 491L160 481H153.5V468.5H146.5V481H140Z" fill="#ff0000"/>
<path d="M346 551L356 541H349.5V528.5H342.5V541H336Z" fill="#ff0000"/>
<path d="M674 373L684 363H677.5V350.5H670.5V363H664Z" fill="#ff0000"/>
<path d="M895 453.5L905 443.5H898.5V431.0H891.5V443.5H885Z" fill="#ff0000"/>
<path d="M1151.5 491.5L1161.5 481.5H1155.0V469.0H1148.0V481.5H1141.5Z" fill="#ff0000"/>
<path d="M1170 486.5L1180 476.5H1173.5V464.0H1166.5V476.5H1160Z" fill="#ff0000"/>
<path d="M1296 512.5L1306 502.5H1299.5V490.0H1292.5V502.5H1286Z" fill="#ff0000"/>
</g>
<path d="M85.5 99V124M78 109.5H85M81 120.5H85" stroke="#000" stroke-width="1" fill="none"/><path d="M1313.5 99V124M1314 109.5H1322M1314 120.5H1318" stroke="#c4c4dc" stroke-width="1" fill="none"/><path d="M85.5 151V306M81 303.5H85M78 293.5H85M81 284.5H85M78 275.5H85M81 266.5H85M78 256.5H85M81 247.5H85M78 238.5H85M81 229.5H85M78 220.5H85M81 210.5H85M78 201.5H85M81 192.5H85M78 183.5H85M81 173.5H85M78 164.5H85M81 155.5H85" stroke="#000" stroke-width="1" fill="none"/><path d="M1313.5 151V306M1314.5 151V306M1314 303.5H1318M1314 293.5H1321M1314 284.5H1318M1314 275.5H1321M1314 266.5H1318M1314 256.5H1321M1314 247.5H1318M1314 238.5H1321M1314 229.5H1318M1314 220.5H1321M1314 210.5H1318M1314 201.5H1321M1314 192.5H1318M1314 183.5H1321M1314 173.5H1318M1314 164.5H1321M1314 155.5H1318" stroke="#b9b9c6" stroke-width="1" fill="none"/><path d="M85.5 333V622M81 352.5H85M81 363.5H85M81 374.5H85M81 385.5H85M81 396.5H85M81 406.5H85M78 417.5H85M81 428.5H85M81 439.5H85M81 450.5H85M81 461.5H85M78 472.5H85M81 482.5H85M81 493.5H85M81 504.5H85M81 515.5H85M78 526.5H85M81 537.5H85M81 548.5H85M81 558.5H85M81 569.5H85M78 580.5H85M81 591.5H85M81 602.5H85M81 613.5H85" stroke="#fff" stroke-width="1" fill="none"/><path d="M1313.5 333V622M1314 352.5H1318M1314 363.5H1318M1314 374.5H1318M1314 385.5H1318M1314 396.5H1318M1314 406.5H1318M1314 417.5H1321M1314 428.5H1318M1314 439.5H1318M1314 450.5H1318M1314 461.5H1318M1314 472.5H1321M1314 482.5H1318M1314 493.5H1318M1314 504.5H1318M1314 515.5H1318M1314 526.5H1321M1314 537.5H1318M1314 548.5H1318M1314 558.5H1318M1314 569.5H1318M1314 580.5H1321M1314 591.5H1318M1314 602.5H1318M1314 613.5H1318" stroke="#fff" stroke-width="1" fill="none"/>
</svg>
<div class="t" style="left:59px;top:104px;font-size:12px;line-height:14px;color:#000;width:15px;text-align:right;">10</div>
<div class="t" style="left:1340px;top:104px;font-size:12px;line-height:14px;color:#b4b4e4;width:19px;text-align:right;">10</div>
<div class="t" style="left:50px;top:286px;font-size:12px;line-height:14px;color:#000;width:24px;text-align:right;">-3</div>
<div class="t" style="left:1335px;top:287px;font-size:12px;line-height:14px;color:#e2c6aa;width:24px;text-align:right;">-3</div>
<div class="t" style="left:50px;top:268px;font-size:12px;line-height:14px;color:#000;width:24px;text-align:right;">-2</div>
<div class="t" style="left:1335px;top:269px;font-size:12px;line-height:14px;color:#e2c6aa;width:24px;text-align:right;">-2</div>
<div class="t" style="left:50px;top:249px;font-size:12px;line-height:14px;color:#000;width:24px;text-align:right;">-1</div>
<div class="t" style="left:1335px;top:250px;font-size:12px;line-height:14px;color:#e2c6aa;width:24px;text-align:right;">-1</div>
<div class="t" style="left:50px;top:231px;font-size:12px;line-height:14px;color:#000;width:24px;text-align:right;">0</div>
<div class="t" style="left:1335px;top:232px;font-size:12px;line-height:14px;color:#e2c6aa;width:24px;text-align:right;">0</div>
<div class="t" style="left:50px;top:213px;font-size:12px;line-height:14px;color:#000;width:24px;text-align:right;">1</div>
<div class="t" style="left:1335px;top:214px;font-size:12px;line-height:14px;color:#e2c6aa;width:24px;text-align:right;">1</div>
<div class="t" style="left:50px;top:194px;font-size:12px;line-height:14px;color:#000;width:24px;text-align:right;">2</div>
<div class="t" style="left:1335px;top:195px;font-size:12px;line-height:14px;color:#e2c6aa;width:24px;text-align:right;">2</div>
<div class="t" style="left:50px;top:176px;font-size:12px;line-height:14px;color:#000;width:24px;text-align:right;">3</div>
<div class="t" style="left:1335px;top:177px;font-size:12px;line-height:14px;color:#e2c6aa;width:24px;text-align:right;">3</div>
<div class="t" style="left:50px;top:157px;font-size:12px;line-height:14px;color:#000;width:24px;text-align:right;">4</div>
<div class="t" style="left:1335px;top:158px;font-size:12px;line-height:14px;color:#e2c6aa;width:24px;text-align:right;">4</div>
<div class="t" style="left:47px;top:412px;font-size:12px;line-height:14px;color:#fff;width:27px;text-align:right;">1.20</div>
<div class="t" style="left:1333px;top:412px;font-size:12px;line-height:14px;color:#fff;width:27px;text-align:right;">1.20</div>
<div class="t" style="left:47px;top:466px;font-size:12px;line-height:14px;color:#fff;width:27px;text-align:right;">1.15</div>
<div class="t" style="left:1333px;top:466px;font-size:12px;line-height:14px;color:#fff;width:27px;text-align:right;">1.15</div>
<div class="t" style="left:47px;top:574px;font-size:12px;line-height:14px;color:#fff;width:27px;text-align:right;">1.05</div>
<div class="t" style="left:1333px;top:574px;font-size:12px;line-height:14px;color:#fff;width:27px;text-align:right;">1.05</div>
<div class="t" style="left:37px;top:514px;width:43px;height:18px;box-sizing:border-box;border:1px solid #fff;background:#000;color:#f00;font-size:10.5px;line-height:16px;text-align:center">1.10160</div>
<div class="t" style="left:1317px;top:514px;width:43px;height:18px;box-sizing:border-box;border:1px solid #fff;background:#000;color:#f00;font-size:10.5px;line-height:16px;text-align:center">1.10160</div>
<div class="t" style="left:109px;top:544px;font-size:12px;line-height:14px;color:#14f014;">Buy</div>
<div class="t" style="left:276px;top:598px;font-size:12px;line-height:14px;color:#14f014;">Buy</div>
<div class="t" style="left:381px;top:566px;font-size:12px;line-height:14px;color:#14f014;">Buy</div>
<div class="t" style="left:843px;top:503px;font-size:12px;line-height:14px;color:#14f014;">Buy</div>
<div class="t" style="left:1135px;top:530px;font-size:12px;line-height:14px;color:#14f014;">Buy</div>
<div class="t" style="left:1151px;top:525px;font-size:12px;line-height:14px;color:#14f014;">Buy</div>
<div class="t" style="left:1264px;top:556px;font-size:12px;line-height:14px;color:#14f014;">Buy</div>
<div class="t" style="left:140px;top:448px;font-size:12px;line-height:14px;color:#f01010;">Sell</div>
<div class="t" style="left:336px;top:508px;font-size:12px;line-height:14px;color:#f01010;">Sell</div>
<div class="t" style="left:665px;top:330px;font-size:12px;line-height:14px;color:#f01010;">Sell</div>
<div class="t" style="left:886px;top:411px;font-size:12px;line-height:14px;color:#f01010;">Sell</div>
<div class="t" style="left:1142px;top:449px;font-size:12px;line-height:14px;color:#f01010;">Sell</div>
<div class="t" style="left:1161px;top:444px;font-size:12px;line-height:14px;color:#f01010;">Sell</div>
<div class="t" style="left:1287px;top:470px;font-size:12px;line-height:14px;color:#f01010;">Sell</div>
<div class="t" style="left:59px;top:129.5px;font-size:16px;line-height:19px;color:#484848;transform:scaleX(0.8759);transform-origin:0 0;">New SAR 3 (</div>
<div class="t" style="left:142px;top:129.5px;font-size:16px;line-height:19px;color:#0000e0;transform:scaleX(0.8431);transform-origin:0 0;">-0.16450,</div>
<div class="t" style="left:206px;top:129.5px;font-size:16px;line-height:19px;color:#008000;transform:scaleX(0.8431);transform-origin:0 0;">-0.71315,</div>
<div class="t" style="left:270px;top:129.5px;font-size:16px;line-height:19px;color:#f8f8f8;transform:scaleX(0.8349);transform-origin:0 0;">0.65124,</div>
<div class="t" style="left:328px;top:129.5px;font-size:16px;line-height:19px;color:#f8f8f8;transform:scaleX(0.8865);transform-origin:0 0;">-0.65124</div>
<div class="t" style="left:387px;top:129.5px;font-size:16px;line-height:19px;color:#484848;">)</div>
<div class="t" style="left:59px;top:311.5px;font-size:16px;line-height:19px;color:#484848;transform:scaleX(0.9260);transform-origin:0 0;">EuroDollar</div>
<div class="t" style="left:135px;top:311.5px;font-size:16px;line-height:19px;color:#8484c4;transform:scaleX(0.8716);transform-origin:0 0;">(1.10480, 1.10550, 1.10150, 1.10160, -0.00330)</div>
<div class="a" style="left:35px;top:634px;width:1279px;height:1px;background:#9a9a9a;"></div>
<div class="a" style="left:85px;top:626px;width:1px;height:26px;background:#fff;"></div>
<div class="a" style="left:82px;top:626px;width:3px;height:1px;background:#fff;"></div>
<div class="a" style="left:82px;top:628px;width:3px;height:1px;background:#fff;"></div>
<div class="a" style="left:78px;top:630px;width:7px;height:1px;background:#fff;"></div>
<div class="a" style="left:82px;top:632px;width:3px;height:1px;background:#fff;"></div>
<div class="a" style="left:1313px;top:626px;width:1px;height:8px;background:#fff;"></div>
<div class="a" style="left:1314px;top:626px;width:3px;height:1px;background:#fff;"></div>
<div class="a" style="left:1314px;top:628px;width:3px;height:1px;background:#fff;"></div>
<div class="a" style="left:1314px;top:630px;width:8px;height:1px;background:#fff;"></div>
<div class="a" style="left:1314px;top:632px;width:3px;height:1px;background:#fff;"></div>
<div class="t" style="left:85px;top:637px;font-size:12px;line-height:15px;color:#fff;width:18px;overflow:hidden;">ul</div>
<div class="a" style="left:104px;top:635px;width:1px;height:16px;background:#e8e8e8;"></div>
<div class="t" style="left:106px;top:637px;font-size:12px;line-height:15px;color:#fff;">Aug</div>
<div class="a" style="left:136px;top:635px;width:1px;height:16px;background:#e8e8e8;"></div>
<div class="t" style="left:138px;top:637px;font-size:12px;line-height:15px;color:#fff;">Sep</div>
<div class="a" style="left:167px;top:635px;width:1px;height:16px;background:#e8e8e8;"></div>
<div class="t" style="left:169px;top:637px;font-size:12px;line-height:15px;color:#fff;">Oct</div>
<div class="a" style="left:196px;top:635px;width:1px;height:16px;background:#e8e8e8;"></div>
<div class="t" style="left:198px;top:637px;font-size:12px;line-height:15px;color:#fff;">Nov</div>
<div class="a" style="left:227px;top:635px;width:1px;height:16px;background:#e8e8e8;"></div>
<div class="t" style="left:229px;top:637px;font-size:12px;line-height:15px;color:#fff;">Dec</div>
<div class="a" style="left:257px;top:635px;width:1px;height:16px;background:#e8e8e8;"></div>
<div class="t" style="left:259px;top:637px;font-size:12px;line-height:15px;color:#fff;">2017</div>
<div class="a" style="left:288px;top:635px;width:1px;height:16px;background:#e8e8e8;"></div>
<div class="a" style="left:316px;top:635px;width:1px;height:16px;background:#e8e8e8;"></div>
<div class="t" style="left:318px;top:637px;font-size:12px;line-height:15px;color:#fff;">Mar</div>
<div class="a" style="left:348px;top:635px;width:1px;height:16px;background:#e8e8e8;"></div>
<div class="t" style="left:350px;top:637px;font-size:12px;line-height:15px;color:#fff;">Apr</div>
<div class="a" style="left:376px;top:635px;width:1px;height:16px;background:#e8e8e8;"></div>
<div class="t" style="left:378px;top:637px;font-size:12px;line-height:15px;color:#fff;">May</div>
<div class="a" style="left:408px;top:635px;width:1px;height:16px;background:#e8e8e8;"></div>
<div class="t" style="left:410px;top:637px;font-size:12px;line-height:15px;color:#fff;">Jun</div>
<div class="a" style="left:439px;top:635px;width:1px;height:16px;background:#e8e8e8;"></div>
<div class="t" style="left:441px;top:637px;font-size:12px;line-height:15px;color:#fff;">Jul</div>
<div class="a" style="left:468px;top:635px;width:1px;height:16px;background:#e8e8e8;"></div>
<div class="t" style="left:470px;top:637px;font-size:12px;line-height:15px;color:#fff;">Aug</div>
<div class="a" style="left:501px;top:635px;width:1px;height:16px;background:#e8e8e8;"></div>
<div class="t" style="left:503px;top:637px;font-size:12px;line-height:15px;color:#fff;">Sep</div>
<div class="a" style="left:530px;top:635px;width:1px;height:16px;background:#e8e8e8;"></div>
<div class="t" style="left:532px;top:637px;font-size:12px;line-height:15px;color:#fff;">Oct</div>
<div class="a" style="left:561px;top:635px;width:1px;height:16px;background:#e8e8e8;"></div>
<div class="t" style="left:563px;top:637px;font-size:12px;line-height:15px;color:#fff;">Nov</div>
<div class="a" style="left:591px;top:635px;width:1px;height:16px;background:#e8e8e8;"></div>
<div class="t" style="left:593px;top:637px;font-size:12px;line-height:15px;color:#fff;">Dec</div>
<div class="a" style="left:621px;top:635px;width:1px;height:16px;background:#e8e8e8;"></div>
<div class="t" style="left:623px;top:637px;font-size:12px;line-height:15px;color:#fff;">2018</div>
<div class="a" style="left:653px;top:635px;width:1px;height:16px;background:#e8e8e8;"></div>
<div class="a" style="left:681px;top:635px;width:1px;height:16px;background:#e8e8e8;"></div>
<div class="t" style="left:683px;top:637px;font-size:12px;line-height:15px;color:#fff;">Mar</div>
<div class="a" style="left:712px;top:635px;width:1px;height:16px;background:#e8e8e8;"></div>
<div class="t" style="left:714px;top:637px;font-size:12px;line-height:15px;color:#fff;">Apr</div>
<div class="a" style="left:741px;top:635px;width:1px;height:16px;background:#e8e8e8;"></div>
<div class="t" style="left:743px;top:637px;font-size:12px;line-height:15px;color:#fff;">May</div>
<div class="a" style="left:773px;top:635px;width:1px;height:16px;background:#e8e8e8;"></div>
<div class="t" style="left:775px;top:637px;font-size:12px;line-height:15px;color:#fff;">Jun</div>
<div class="a" style="left:803px;top:635px;width:1px;height:16px;background:#e8e8e8;"></div>
<div class="t" style="left:805px;top:637px;font-size:12px;line-height:15px;color:#fff;">Jul</div>
<div class="a" style="left:833px;top:635px;width:1px;height:16px;background:#e8e8e8;"></div>
<div class="t" style="left:835px;top:637px;font-size:12px;line-height:15px;color:#fff;">Aug</div>
<div class="a" style="left:866px;top:635px;width:1px;height:16px;background:#e8e8e8;"></div>
<div class="t" style="left:868px;top:637px;font-size:12px;line-height:15px;color:#fff;">Sep</div>
<div class="a" style="left:894px;top:635px;width:1px;height:16px;background:#e8e8e8;"></div>
<div class="t" style="left:896px;top:637px;font-size:12px;line-height:15px;color:#fff;">Oct</div>
<div class="a" style="left:926px;top:635px;width:1px;height:16px;background:#e8e8e8;"></div>
<div class="t" style="left:928px;top:637px;font-size:12px;line-height:15px;color:#fff;">Nov</div>
<div class="a" style="left:956px;top:635px;width:1px;height:16px;background:#e8e8e8;"></div>
<div class="t" style="left:958px;top:637px;font-size:12px;line-height:15px;color:#fff;">Dec</div>
<div class="a" style="left:986px;top:635px;width:1px;height:16px;background:#e8e8e8;"></div>
<div class="t" style="left:988px;top:637px;font-size:12px;line-height:15px;color:#fff;">2019</div>
<div class="a" style="left:1018px;top:635px;width:1px;height:16px;background:#e8e8e8;"></div>
<div class="a" style="left:1046px;top:635px;width:1px;height:16px;background:#e8e8e8;"></div>
<div class="t" style="left:1048px;top:637px;font-size:12px;line-height:15px;color:#fff;">Mar</div>
<div class="a" style="left:1075px;top:635px;width:1px;height:16px;background:#e8e8e8;"></div>
<div class="t" style="left:1077px;top:637px;font-size:12px;line-height:15px;color:#fff;">Apr</div>
<div class="a" style="left:1105px;top:635px;width:1px;height:16px;background:#e8e8e8;"></div>
<div class="t" style="left:1107px;top:637px;font-size:12px;line-height:15px;color:#fff;">May</div>
<div class="a" style="left:1137px;top:635px;width:1px;height:16px;background:#e8e8e8;"></div>
<div class="t" style="left:1139px;top:637px;font-size:12px;line-height:15px;color:#fff;">Jun</div>
<div class="a" style="left:1166px;top:635px;width:1px;height:16px;background:#e8e8e8;"></div>
<div class="t" style="left:1168px;top:637px;font-size:12px;line-height:15px;color:#fff;">Jul</div>
<div class="a" style="left:1198px;top:635px;width:1px;height:16px;background:#e8e8e8;"></div>
<div class="t" style="left:1200px;top:637px;font-size:12px;line-height:15px;color:#fff;">Aug</div>
<div class="a" style="left:1229px;top:635px;width:1px;height:16px;background:#e8e8e8;"></div>
<div class="t" style="left:1231px;top:637px;font-size:12px;line-height:15px;color:#fff;">Sep</div>
<div class="a" style="left:1258px;top:635px;width:1px;height:16px;background:#e8e8e8;"></div>
<div class="t" style="left:1260px;top:637px;font-size:12px;line-height:15px;color:#fff;">Oct</div>
<div class="a" style="left:1290px;top:635px;width:1px;height:16px;background:#e8e8e8;"></div>
<div class="t" style="left:1292px;top:637px;font-size:12px;line-height:15px;color:#fff;">Nov</div>
<div class="a" style="left:35px;top:651px;width:1279px;height:1px;background:#4a4a4a;"></div>
<div class="a" style="left:35px;top:652px;width:1279px;height:1px;background:#7e7e7e;"></div>
<!-- left -->
<div class="a" style="left:0px;top:76px;width:34px;height:600px;background:#ebebeb;"></div>
<div class="a" style="left:33px;top:76px;width:1px;height:600px;background:#f8f8f8;"></div>
<div class="a" style="left:3px;top:80px;width:30px;height:7px;background:linear-gradient(90deg,#e6e6e6,#c9c9c9);border-bottom:1px solid #a8a8a8"></div><div class="a" style="left:17px;top:82px;width:3px;height:3px;background:#555;"></div><div class="a" style="left:18px;top:83px;width:1px;height:1px;background:#ccc;"></div>
<div class="a" style="left:3px;top:89px;width:13px;height:26px;box-sizing:border-box;background:#eeeeee;border:1px solid #fff;border-right:2px solid #8c8c8c;border-bottom:2px solid #8c8c8c"></div>
<div class="a" style="left:17px;top:89px;width:13px;height:26px;box-sizing:border-box;background:#eeeeee;border:1px solid #fff;border-right:2px solid #8c8c8c;border-bottom:2px solid #8c8c8c"></div>
<svg class="a" style="left:6.5px;top:98.5px" width="4" height="6" viewBox="0 0 4 6"><path d="M3.800 0V6L0.300 3Z" fill="#000"/></svg>
<svg class="a" style="left:21.5px;top:98.5px" width="4" height="6" viewBox="0 0 4 6"><path d="M0.200 0V6L3.700 3Z" fill="#000"/></svg>
<div class="a" style="left:5px;top:117px;width:23px;height:1px;background:#a0a0a0;"></div>
<div class="a" style="left:5px;top:118px;width:23px;height:1px;background:#fff;"></div>
<div class="a" style="left:6px;top:124px;width:20px;height:20px;box-sizing:border-box;background:linear-gradient(160deg,#f8f8f8,#e6e6e6 55%,#d2d2d2);border:1px solid #b4b4b4;border-right-color:#9c9c9c;border-bottom-color:#9c9c9c"></div>
<div class="t" style="left:8px;top:126px;font-size:11px;line-height:14px;color:#222;transform:scaleX(0.9021);transform-origin:0 0;">abc</div>
<svg width="0" height="0" style="position:absolute"><defs><linearGradient id="gCell" x1="0" y1="0" x2="1" y2="1"><stop offset="0" stop-color="#fdfdfd"/><stop offset="1" stop-color="#d4d4d4"/></linearGradient><linearGradient id="gShape" x1="0" y1="0" x2="1" y2="1"><stop offset="0" stop-color="#fff"/><stop offset="1" stop-color="#c8c8c8"/></linearGradient></defs></svg>
<svg class="a" style="left:6px;top:150px" width="20" height="20" viewBox="0 0 20 20"><rect x="0.5" y="0.5" width="19" height="19" fill="#f0f0f0" stroke="#a8a8a8"/><rect x="1.2" y="1.2" width="5.2" height="5.2" fill="url(#gCell)"/><rect x="1.2" y="7.7" width="5.2" height="5.2" fill="url(#gCell)"/><rect x="1.2" y="14.2" width="5.2" height="5.2" fill="url(#gCell)"/><rect x="7.7" y="1.2" width="5.2" height="5.2" fill="url(#gCell)"/><rect x="7.7" y="7.7" width="5.2" height="5.2" fill="url(#gCell)"/><rect x="7.7" y="14.2" width="5.2" height="5.2" fill="url(#gCell)"/><rect x="14.2" y="1.2" width="5.2" height="5.2" fill="url(#gCell)"/><rect x="14.2" y="7.7" width="5.2" height="5.2" fill="url(#gCell)"/><rect x="14.2" y="14.2" width="5.2" height="5.2" fill="url(#gCell)"/><path d="M7 1V19M13.500 1V19M1 7H19M1 13.500H19" stroke="#5e5e5e" stroke-width="1.100"/></svg>
<div class="a" style="left:5px;top:175px;width:23px;height:1px;background:#a0a0a0;"></div>
<div class="a" style="left:5px;top:176px;width:23px;height:1px;background:#fff;"></div>
<svg class="a" style="left:6px;top:185px" width="20" height="14" viewBox="0 0 20 14"><ellipse cx="10" cy="7" rx="9" ry="5.6" fill="url(#gShape)" stroke="#4a4a4a" stroke-width="1.2"/></svg>
<svg class="a" style="left:6px;top:212px" width="20" height="14" viewBox="0 0 20 14"><rect x="0.8" y="0.8" width="18.4" height="11.6" fill="url(#gShape)" stroke="#4a4a4a" stroke-width="1.3"/></svg>
<svg class="a" style="left:6px;top:236px" width="20" height="15" viewBox="0 0 20 15"><path d="M10 1L19 13.6H1Z" fill="url(#gShape)" stroke="#4a4a4a" stroke-width="1.3" stroke-linejoin="miter"/></svg>
<div class="a" style="left:0px;top:264px;width:34px;height:1px;background:#c4c4c4;"></div>
<div class="a" style="left:0px;top:265px;width:34px;height:1px;background:#fdfdfd;"></div>
<div class="a" style="left:3px;top:269px;width:30px;height:7px;background:linear-gradient(90deg,#e6e6e6,#c9c9c9);border-bottom:1px solid #a8a8a8"></div><div class="a" style="left:17px;top:271px;width:3px;height:3px;background:#555;"></div><div class="a" style="left:18px;top:272px;width:1px;height:1px;background:#ccc;"></div>
<div class="a" style="left:4px;top:280px;width:24px;height:23px;box-sizing:border-box;background:#f6f6f6;border:1px dotted #7c8a9c;"></div>
<svg class="a" style="left:10px;top:284px" width="12" height="16" viewBox="0 0 12 16"><path d="M1 1V12.4L4.2 9.6L6.6 14.8L9 13.6L6.6 8.6H10.8Z" fill="#fff" stroke="#2a62c8" stroke-width="1.5" stroke-linejoin="round"/></svg>
<div class="a" style="left:6px;top:306px;width:20px;height:20px;box-sizing:border-box;background:linear-gradient(160deg,#f8f8f8,#e6e6e6 55%,#d2d2d2);border:1px solid #b4b4b4;border-right-color:#9c9c9c;border-bottom-color:#9c9c9c"></div>
<svg class="a" style="left:9px;top:309px" width="14" height="14" viewBox="0 0 14 14"><path d="M7 0.5V13.5M0.5 7H13.5" stroke="#3a3a3a" stroke-width="1.8"/></svg>
<div class="a" style="left:5px;top:332px;width:23px;height:1px;background:#a0a0a0;"></div>
<div class="a" style="left:5px;top:333px;width:23px;height:1px;background:#fff;"></div>
<div class="a" style="left:6px;top:339px;width:20px;height:20px;box-sizing:border-box;background:linear-gradient(160deg,#f8f8f8,#e6e6e6 55%,#d2d2d2);border:1px solid #b4b4b4;border-right-color:#9c9c9c;border-bottom-color:#9c9c9c"></div>
<svg class="a" style="left:8px;top:341px" width="16" height="16" viewBox="0 0 16 16"><path d="M1 1L15 15" stroke="#2a2a2a" stroke-width="1.6"/></svg>
<div class="a" style="left:6px;top:365px;width:20px;height:20px;box-sizing:border-box;background:linear-gradient(160deg,#f8f8f8,#e6e6e6 55%,#d2d2d2);border:1px solid #b4b4b4;border-right-color:#9c9c9c;border-bottom-color:#9c9c9c"></div>
<svg class="a" style="left:9px;top:373px" width="14" height="3" viewBox="0 0 14 3"><path d="M0 1.5H14" stroke="#3a3a3a" stroke-width="2"/></svg>
<div class="a" style="left:6px;top:391px;width:20px;height:20px;box-sizing:border-box;background:linear-gradient(160deg,#f8f8f8,#e6e6e6 55%,#d2d2d2);border:1px solid #b4b4b4;border-right-color:#9c9c9c;border-bottom-color:#9c9c9c"></div>
<svg class="a" style="left:14px;top:394px" width="3" height="14" viewBox="0 0 3 14"><path d="M1.5 0V14" stroke="#3a3a3a" stroke-width="2"/></svg>
<div class="a" style="left:6px;top:417px;width:20px;height:20px;box-sizing:border-box;background:linear-gradient(160deg,#f8f8f8,#e6e6e6 55%,#d2d2d2);border:1px solid #b4b4b4;border-right-color:#9c9c9c;border-bottom-color:#9c9c9c"></div>
<svg class="a" style="left:7px;top:418px" width="18" height="18" viewBox="0 0 18 18"><path d="M1.5 1.5L16.5 16.5" stroke="#2a2a2a" stroke-width="1.5"/></svg>
<div class="t" style="left:17px;top:418px;font-size:8px;line-height:9px;color:#222;">L</div>
<div class="t" style="left:8px;top:427px;font-size:8px;line-height:9px;color:#222;">S</div>
<div class="a" style="left:0px;top:446px;width:34px;height:1px;background:#c4c4c4;"></div>
<div class="a" style="left:0px;top:447px;width:34px;height:1px;background:#fdfdfd;"></div>
<!-- bottom -->
<div class="a" style="left:35px;top:653px;width:1329px;height:20px;background:#ededed;"></div>
<div class="a" style="left:52px;top:653px;width:380px;height:20px;background:#f6f6f6;"></div>
<div class="a" style="left:432px;top:653px;width:701px;height:20px;box-sizing:border-box;background:#eeeeee;border:1px solid #fdfdfd;border-right:2px solid #8a8a8a;border-bottom:2px solid #8a8a8a"></div>
<div class="a" style="left:35px;top:653px;width:17px;height:20px;box-sizing:border-box;background:#ececec;border:1px solid #fdfdfd;border-right:2px solid #8a8a8a;border-bottom:2px solid #8a8a8a"></div>
<div class="a" style="left:1133px;top:653px;width:17px;height:20px;box-sizing:border-box;background:#ececec;border:1px solid #fdfdfd;border-right:2px solid #8a8a8a;border-bottom:2px solid #8a8a8a"></div>
<svg class="a" style="left:40px;top:659px" width="5" height="8" viewBox="0 0 5 8"><path d="M5 0V8L0.4 4Z" fill="#9a9a9a"/></svg>
<svg class="a" style="left:1140px;top:659px" width="5" height="8" viewBox="0 0 5 8"><path d="M0 0V8L4.6 4Z" fill="#9a9a9a"/></svg>
<div class="a" style="left:1152px;top:655px;width:1px;height:17px;background:#9a9a9a;"></div><div class="a" style="left:1153px;top:655px;width:1px;height:17px;background:#fbfbfb;"></div>
<svg class="a" style="left:1159px;top:656px" width="14" height="14" viewBox="0 0 14 14"><path d="M2 6A5.2 5.2 0 0 1 11 3.6M12 8A5.2 5.2 0 0 1 3 10.4" stroke="#4a4a4a" stroke-width="2.2" fill="none"/><path d="M8.6 4.4H13V0.4Z" fill="#4a4a4a"/><path d="M5.4 9.6H1V13.6Z" fill="#4a4a4a"/></svg>
<div class="t" style="left:1183px;top:656px;font-size:12px;line-height:14px;color:#4a4a4a;font-weight:bold;">D</div>
<div class="a" style="left:1200px;top:655px;width:1px;height:17px;background:#9a9a9a;"></div><div class="a" style="left:1201px;top:655px;width:1px;height:17px;background:#fbfbfb;"></div>
<svg class="a" style="left:1210px;top:657px" width="8" height="13" viewBox="0 0 8 13"><path d="M4 0L7.6 4H5V9H7.6L4 13L0.4 9H3V4H0.4Z" fill="#4a4a4a"/></svg>
<svg class="a" style="left:1227px;top:656px" width="15" height="15" viewBox="0 0 15 15"><path d="M7.5 0L10.4 3.2H8.4V6.6H11.8V4.6L15 7.5L11.8 10.4V8.4H8.4V11.8H10.4L7.5 15L4.6 11.8H6.6V8.4H3.2V10.4L0 7.5L3.2 4.6V6.6H6.6V3.2H4.6Z" fill="#4a4a4a"/></svg>
<svg class="a" style="left:1250px;top:657px" width="13" height="13" viewBox="0 0 13 13"><circle cx="6.5" cy="6.5" r="5.4" fill="#f2f2f2" stroke="#5a5a5a" stroke-width="1.3"/><path d="M3.6 6.5H9.4" stroke="#4a4a4a" stroke-width="1.8"/></svg>
<svg class="a" style="left:1271px;top:657px" width="13" height="13" viewBox="0 0 13 13"><circle cx="6.5" cy="6.5" r="5.4" fill="#f2f2f2" stroke="#5a5a5a" stroke-width="1.3"/><path d="M3.6 6.5H9.4M6.5 3.6V9.4" stroke="#4a4a4a" stroke-width="1.8"/></svg>
<div class="a" style="left:1290px;top:655px;width:1px;height:17px;background:#9a9a9a;"></div><div class="a" style="left:1291px;top:655px;width:1px;height:17px;background:#fbfbfb;"></div>
<svg class="a" style="left:1301px;top:659px" width="6" height="9" viewBox="0 0 6 9"><path d="M6 0V9L0.4 4.5Z" fill="#c4c4c4"/></svg>
<svg class="a" style="left:1322px;top:659px" width="6" height="9" viewBox="0 0 6 9"><path d="M0 0V9L5.6 4.5Z" fill="#c4c4c4"/></svg>
<svg class="a" style="left:1339px;top:657px" width="13" height="13" viewBox="0 0 13 13"><rect x="0.7" y="0.7" width="11.6" height="11.6" fill="#f8f8f8" stroke="#4a4a4a" stroke-width="1.3"/><rect x="0.7" y="0.7" width="11.6" height="1.6" fill="#4a4a4a"/><path d="M2.6 5.6H4M5.2 5.6H10.6M2.6 7.8H4M5.2 7.8H10.6M2.6 10H4M5.2 10H10.6" stroke="#4a4a4a" stroke-width="1.1"/></svg>
<div class="a" style="left:1359px;top:655px;width:1px;height:17px;background:#9a9a9a;"></div><div class="a" style="left:1360px;top:655px;width:1px;height:17px;background:#fbfbfb;"></div>
<div class="a" style="left:0px;top:675px;width:35px;height:1px;background:#c8c8c8;"></div>
<div class="a" style="left:35px;top:675px;width:1331px;height:1px;background:#f0f0f0;"></div>
<div class="a" style="left:0px;top:676px;width:1366px;height:32px;background:#ebebeb;"></div>
<div class="a" style="left:0px;top:676px;width:1366px;height:1px;background:#fafafa;"></div>
<div class="a" style="left:0px;top:707px;width:1366px;height:1px;background:#a8a8a8;"></div>
<div class="a" style="left:0px;top:708px;width:1366px;height:1px;background:#fdfdfd;"></div>
<div class="a" style="left:5px;top:678px;width:7px;height:29px;background:linear-gradient(90deg,#dedede,#c2c2c2);"></div><div class="a" style="left:12px;top:678px;width:1px;height:29px;background:#9a9a9a;"></div><div class="a" style="left:7px;top:692px;width:3px;height:3px;background:#555;"></div><div class="a" style="left:8px;top:693px;width:1px;height:1px;background:#ccc;"></div>
<div class="a" style="left:14px;top:684px;width:127px;height:18px;box-sizing:border-box;background:#fff;border:1px solid #7e7e7e;border-right-color:#e8e8e8;border-bottom-color:#e8e8e8;box-shadow:inset 1px 1px 0 #555"></div><div class="a" style="left:29px;top:693px;width:81px;height:1px;background:#000;"></div><div class="a" style="left:124px;top:685px;width:16px;height:16px;box-sizing:border-box;background:#ececec;border:1px solid #fff;border-right:1px solid #6e6e6e;border-bottom:1px solid #6e6e6e"></div><svg class="a" style="left:128px;top:691px" width="8" height="5" viewBox="0 0 8 5"><path d="M0 0H8L4 4.5Z" fill="#000"/></svg>
<div class="a" style="left:145px;top:679px;width:1px;height:27px;background:#a6a6a6;"></div><div class="a" style="left:146px;top:679px;width:1px;height:27px;background:#fcfcfc;"></div>
<div class="a" style="left:149px;top:684px;width:98px;height:18px;box-sizing:border-box;background:#fff;border:1px solid #7e7e7e;border-right-color:#e8e8e8;border-bottom-color:#e8e8e8;box-shadow:inset 1px 1px 0 #555"></div><div class="a" style="left:161px;top:693px;width:59px;height:1px;background:#000;"></div><div class="a" style="left:230px;top:685px;width:16px;height:16px;box-sizing:border-box;background:#ececec;border:1px solid #fff;border-right:1px solid #6e6e6e;border-bottom:1px solid #6e6e6e"></div><svg class="a" style="left:234px;top:691px" width="8" height="5" viewBox="0 0 8 5"><path d="M0 0H8L4 4.5Z" fill="#000"/></svg>
<div class="a" style="left:255px;top:679px;width:1px;height:27px;background:#a6a6a6;"></div><div class="a" style="left:256px;top:679px;width:1px;height:27px;background:#fcfcfc;"></div>
<div class="a" style="left:262px;top:678px;width:7px;height:29px;background:linear-gradient(90deg,#dedede,#c2c2c2);"></div><div class="a" style="left:269px;top:678px;width:1px;height:29px;background:#9a9a9a;"></div><div class="a" style="left:264px;top:692px;width:3px;height:3px;background:#555;"></div><div class="a" style="left:265px;top:693px;width:1px;height:1px;background:#ccc;"></div>
<div class="a" style="left:272px;top:682px;width:11px;height:11px;box-sizing:border-box;background:#ffffff;border:1px solid #a8a8a8"></div>
<div class="a" style="left:284px;top:682px;width:11px;height:11px;box-sizing:border-box;background:#009400;border:1px solid #a8a8a8"></div>
<div class="a" style="left:296px;top:682px;width:11px;height:11px;box-sizing:border-box;background:#005c00;border:1px solid #a8a8a8"></div>
<div class="a" style="left:308px;top:682px;width:11px;height:11px;box-sizing:border-box;background:#000000;border:1px solid #a8a8a8"></div>
<div class="a" style="left:320px;top:682px;width:11px;height:11px;box-sizing:border-box;background:#ff8000;border:1px solid #a8a8a8"></div>
<div class="a" style="left:332px;top:682px;width:11px;height:11px;box-sizing:border-box;background:#e0600a;border:1px solid #a8a8a8"></div>
<div class="a" style="left:343px;top:682px;width:11px;height:11px;box-sizing:border-box;background:#8080c0;border:1px solid #a8a8a8"></div>
<div class="a" style="left:355px;top:682px;width:11px;height:11px;box-sizing:border-box;background:#ffe4e0;border:1px solid #a8a8a8"></div>
<div class="a" style="left:272px;top:694px;width:11px;height:11px;box-sizing:border-box;background:#00005c;border:1px solid #a8a8a8"></div>
<div class="a" style="left:284px;top:694px;width:11px;height:11px;box-sizing:border-box;background:#000090;border:1px solid #a8a8a8"></div>
<div class="a" style="left:296px;top:694px;width:11px;height:11px;box-sizing:border-box;background:#ffd800;border:1px solid #a8a8a8"></div>
<div class="a" style="left:308px;top:694px;width:11px;height:11px;box-sizing:border-box;background:#004040;border:1px solid #a8a8a8"></div>
<div class="a" style="left:320px;top:694px;width:11px;height:11px;box-sizing:border-box;background:#880000;border:1px solid #a8a8a8"></div>
<div class="a" style="left:332px;top:694px;width:11px;height:11px;box-sizing:border-box;background:#d8b88c;border:1px solid #a8a8a8"></div>
<div class="a" style="left:343px;top:694px;width:11px;height:11px;box-sizing:border-box;background:#ff0000;border:1px dashed #fff;outline:1px dotted #888;outline-offset:0px"></div>
<div class="a" style="left:355px;top:694px;width:11px;height:11px;box-sizing:border-box;background:#0000ff;border:1px solid #a8a8a8"></div>
<svg class="a" style="left:369px;top:692px" width="6" height="4" viewBox="0 0 6 4"><path d="M0 0H6L3 3.5Z" fill="#000"/></svg>
<div class="a" style="left:384px;top:679px;width:1px;height:27px;background:#a6a6a6;"></div><div class="a" style="left:385px;top:679px;width:1px;height:27px;background:#fcfcfc;"></div>
<div class="a" style="left:391px;top:678px;width:7px;height:29px;background:linear-gradient(90deg,#dedede,#c2c2c2);"></div><div class="a" style="left:398px;top:678px;width:1px;height:29px;background:#9a9a9a;"></div><div class="a" style="left:393px;top:692px;width:3px;height:3px;background:#555;"></div><div class="a" style="left:394px;top:693px;width:1px;height:1px;background:#ccc;"></div>
<div class="a" style="left:404px;top:688px;width:16px;height:13px;box-sizing:border-box;background:#fff;border:1px solid #5e86b0;border-radius:2px;"></div>
<div class="a" style="left:406px;top:690px;width:12px;height:1px;background:#a8c4e0;"></div>
<svg class="a" style="left:406px;top:693px" width="5" height="5" viewBox="0 0 5 5"><path d="M0.3 4.6L2.4 1L4.8 2.6" stroke="#c00000" stroke-width="1" fill="none"/></svg>
<div class="t" style="left:412px;top:690px;font-size:10px;line-height:11px;color:#000;">1</div>
<div class="a" style="left:431px;top:688px;width:16px;height:13px;box-sizing:border-box;background:#fff;border:1px solid #5e86b0;border-radius:2px;"></div>
<div class="a" style="left:433px;top:690px;width:12px;height:1px;background:#a8c4e0;"></div>
<svg class="a" style="left:433px;top:693px" width="5" height="5" viewBox="0 0 5 5"><path d="M0.3 4.6L2.4 1L4.8 2.6" stroke="#c00000" stroke-width="1" fill="none"/></svg>
<div class="t" style="left:439px;top:690px;font-size:10px;line-height:11px;color:#000;">2</div>
<div class="a" style="left:458px;top:688px;width:16px;height:13px;box-sizing:border-box;background:#fff;border:1px solid #5e86b0;border-radius:2px;"></div>
<div class="a" style="left:460px;top:690px;width:12px;height:1px;background:#a8c4e0;"></div>
<svg class="a" style="left:460px;top:693px" width="5" height="5" viewBox="0 0 5 5"><path d="M0.3 4.6L2.4 1L4.8 2.6" stroke="#c00000" stroke-width="1" fill="none"/></svg>
<div class="t" style="left:466px;top:690px;font-size:10px;line-height:11px;color:#000;">3</div>
<div class="a" style="left:485px;top:688px;width:16px;height:13px;box-sizing:border-box;background:#fff;border:1px solid #5e86b0;border-radius:2px;"></div>
<div class="a" style="left:487px;top:690px;width:12px;height:1px;background:#a8c4e0;"></div>
<svg class="a" style="left:487px;top:693px" width="5" height="5" viewBox="0 0 5 5"><path d="M0.3 4.6L2.4 1L4.8 2.6" stroke="#c00000" stroke-width="1" fill="none"/></svg>
<div class="t" style="left:493px;top:690px;font-size:10px;line-height:11px;color:#000;">4</div>
<div class="a" style="left:512px;top:688px;width:16px;height:13px;box-sizing:border-box;background:#fff;border:1px solid #5e86b0;border-radius:2px;"></div>
<div class="a" style="left:514px;top:690px;width:12px;height:1px;background:#a8c4e0;"></div>
<svg class="a" style="left:514px;top:693px" width="5" height="5" viewBox="0 0 5 5"><path d="M0.3 4.6L2.4 1L4.8 2.6" stroke="#c00000" stroke-width="1" fill="none"/></svg>
<div class="t" style="left:520px;top:690px;font-size:10px;line-height:11px;color:#000;">5</div>
<div class="a" style="left:539px;top:688px;width:16px;height:13px;box-sizing:border-box;background:#fff;border:1px solid #5e86b0;border-radius:2px;"></div>
<div class="a" style="left:541px;top:690px;width:12px;height:1px;background:#a8c4e0;"></div>
<svg class="a" style="left:541px;top:693px" width="5" height="5" viewBox="0 0 5 5"><path d="M0.3 4.6L2.4 1L4.8 2.6" stroke="#c00000" stroke-width="1" fill="none"/></svg>
<div class="t" style="left:547px;top:690px;font-size:10px;line-height:11px;color:#000;">6</div>
<div class="a" style="left:567px;top:679px;width:1px;height:27px;background:#a6a6a6;"></div><div class="a" style="left:568px;top:679px;width:1px;height:27px;background:#fcfcfc;"></div>
<div class="a" style="left:0px;top:709px;width:1366px;height:19px;background:#444444;"></div>
<div class="t" style="left:10px;top:712px;font-size:13px;line-height:16px;color:#fff;transform:scaleX(0.9383);transform-origin:0 0;">For Help, press F1</div>
<div class="t" style="left:1096px;top:712px;font-size:13px;line-height:16px;color:#fff;transform:scaleX(0.9222);transform-origin:0 0;">15/10/2018</div>
<div class="t" style="left:1253px;top:712px;font-size:13px;line-height:16px;color:#fff;transform:scaleX(0.9363);transform-origin:0 0;">1.03806</div>
<div class="a" style="left:1345px;top:712px;width:21px;height:15px;background:#f4f4f4;"></div>
<div class="t" style="left:1351px;top:712px;font-size:13px;line-height:16px;color:#0a7a1a;font-weight:bold;">$</div>
<!-- taskbar -->
<div class="a" style="left:0;top:728px;width:1366px;height:40px;background:linear-gradient(90deg,#b8862a 0.00%,#bd8a2c 21.96%,#bf8a2c 41.00%,#b9802a 44.29%,#b67b2a 48.83%,#ab8c3e 49.27%,#ba9a4c 53.44%,#c6a458 54.76%,#c9a75e 65.89%,#c5a566 86.38%,#c4a466 100.00%);"></div>
<div class="a" style="left:1170px;top:728px;width:196px;height:40px;background:linear-gradient(23.7deg,rgba(214,170,58,0) 30%,rgba(214,170,58,1) 38%,#d2a636 100%);"></div>
<div class="a" style="left:0px;top:728px;width:1366px;height:3px;background:#7d6c45;"></div>
<div class="a" style="left:238px;top:729px;width:58px;height:39px;box-sizing:border-box;background:linear-gradient(90deg,#d0b078,#d9bd8a);border:1px solid #fdf8ec;"></div>
<div class="a" style="left:548px;top:729px;width:58px;height:39px;box-sizing:border-box;background:#c99c52;border:1px solid #d8b478;border-bottom:none"></div>
<svg class="a" style="left:12px;top:734px" width="27" height="27" viewBox="0 0 27 27"><path d="M0 4L11.4 2.3V12.8H0ZM13 2.1L27 0V12.8H13ZM0 14.3H11.4V24.8L0 23.1ZM13 14.3H27V27L13 25Z" fill="#fff"/></svg>
<svg class="a" style="left:66px;top:733px" width="30" height="30" viewBox="0 0 30 30"><circle cx="15" cy="15" r="15" fill="#dc4437"/><path d="M15 15L2.0 7.5A15 15 0 0 0 15.0 30L21.5 18.75Z" fill="#1aa260"/><path d="M15 15L21.5 18.75L15 30A15 15 0 0 0 28 7.5H15Z" fill="#ffcd42"/><path d="M2 7.5A15 15 0 0 1 28 7.5H15Z" fill="#dc4437"/><path d="M15 15L8.5 18.75L2 7.5Z" fill="#1aa260"/><circle cx="15" cy="15" r="7" fill="#fff"/><circle cx="15" cy="15" r="5.6" fill="#4c8bf5"/></svg>
<svg class="a" style="left:127px;top:734px" width="32" height="31" viewBox="0 0 30 29"><path d="M1 4H11L13 6.5H29V24H1Z" fill="#e8c878"/><rect x="2.5" y="1.5" width="7" height="4" fill="#f4f4f4"/><rect x="3.5" y="2" width="2.4" height="1.8" fill="#30b030"/><rect x="11" y="3.5" width="7" height="4" fill="#f4f4f4"/><rect x="12" y="4" width="2.4" height="1.8" fill="#e03030"/><rect x="19.5" y="5.5" width="7" height="4" fill="#f4f4f4"/><rect x="20.5" y="6" width="2.4" height="1.8" fill="#3080e0"/><path d="M1 9H29V26H1Z" fill="#f6dc94"/><path d="M1 9H29V12H1Z" fill="#fbeab4"/><path d="M5 28V19.5C5 17.5 6.5 16.5 8 16.5H22C23.500 16.5 25 17.5 25 19.5V28H19V22.5H11V28Z" fill="#8ecdf0" stroke="#3c8cc8" stroke-width="1"/><path d="M6 20H24" stroke="#d8f0ff" stroke-width="1.6"/></svg>
<svg class="a" style="left:190px;top:733px" width="30" height="30" viewBox="0 0 30 30"><rect x="13" y="4" width="17" height="22" fill="#fff" stroke="#d24625" stroke-width="1.3"/><circle cx="22.5" cy="11" r="4.2" fill="none" stroke="#d24625" stroke-width="1.4"/><path d="M22.500 11V6.8A4.2 4.2 0 0 1 26.700 11Z" fill="#d24625"/><path d="M17.500 18.500H27.500M17.500 21.500H27.500" stroke="#d24625" stroke-width="1.5"/><path d="M0 3.2L18 0V30L0 26.800Z" fill="#d24625"/><path d="M5.800 21.500V9.200H9.400A3.500 3.500 0 0 1 9.400 16.200H5.800" stroke="#fff" stroke-width="2.500" fill="none"/></svg>
<svg class="a" style="left:251px;top:732px" width="32" height="32" viewBox="0 0 32 32"><defs><linearGradient id="gMS" x1="0" y1="0" x2="0" y2="1"><stop offset="0" stop-color="#8c8c8c"/><stop offset="0.300" stop-color="#5a5a5a"/><stop offset="0.650" stop-color="#0a0a0a"/><stop offset="1" stop-color="#000"/></linearGradient><linearGradient id="gMSo" x1="0" y1="0" x2="0" y2="1"><stop offset="0" stop-color="#f8741c"/><stop offset="1" stop-color="#fca01c"/></linearGradient></defs><rect x="0" y="0" width="32" height="32" rx="3.500" fill="#0a0a0a"/><rect x="0.800" y="0.800" width="30.400" height="30.400" rx="3" fill="url(#gMS)"/><path d="M8 30L9 17.800L12 17.800L11.500 30Z" fill="url(#gMSo)"/><path d="M13.200 30L14.200 10.200L17.800 10.200L17.200 30Z" fill="url(#gMSo)"/><path d="M18.500 30L20 2.300L24 2.300L22.500 30Z" fill="url(#gMSo)"/></svg>
<svg class="a" style="left:314px;top:733px" width="30" height="30" viewBox="0 0 30 30"><rect x="13" y="4" width="17" height="22" fill="#fff" stroke="#2b579a" stroke-width="1.3"/><path d="M19.500 8H28M19.500 11H28M19.500 14H28M19.500 17H28M19.500 20H28M19.500 23H28" stroke="#2b579a" stroke-width="1"/><path d="M0 3.200L18 0V30L0 26.800Z" fill="#2b579a"/><path d="M4.300 10.800L6.300 19.500L8.900 12.300L11.500 19.500L13.500 10.800" stroke="#fff" stroke-width="1.900" fill="none" stroke-linejoin="round"/></svg>
<svg class="a" style="left:376px;top:732px" width="30" height="30" viewBox="0 0 30 30"><rect width="30" height="31" rx="2.500" fill="#0a5ce0"/><rect width="30" height="29.500" rx="2.500" fill="#1a6cfc"/><path d="M5.700 20.600V8.800H20.500A3.500 3.500 0 0 1 24 12.300V20.600H19.600V12.800H10.200V20.600Z" fill="#fff"/><rect x="12.600" y="15.900" width="4.700" height="4.700" fill="#fff"/></svg>
<svg class="a" style="left:437px;top:732px" width="32" height="32" viewBox="0 0 32 32"><defs><linearGradient id="gIE" x1="0" y1="0" x2="0.300" y2="1"><stop offset="0" stop-color="#a4e8fc"/><stop offset="0.450" stop-color="#58c4f4"/><stop offset="1" stop-color="#2a98e0"/></linearGradient></defs><path fill-rule="evenodd" fill="url(#gIE)" d="M3.600 15.900A13.700 13.700 0 1 1 31 15.900A13.700 13.700 0 1 1 3.600 15.900ZM12.300 15.700A4.900 6.400 0 0 1 22 15.700ZM11.500 19.300H30.400L28.700 23.300H24.500A7 5.500 0 0 1 11.500 19.300Z"/><g transform="translate(15.700 14.500) rotate(-41)"><path d="M-18.500 0A18.500 5.500 0 0 1 18.500 0" fill="none" stroke="#f8c418" stroke-width="2.600" stroke-linecap="round"/><path d="M-17.500 -1.200A18 5 0 0 1 17 -2" fill="none" stroke="#fce890" stroke-width="0.800"/></g></svg>
<svg class="a" style="left:503px;top:733px" width="23" height="29" viewBox="0 0 23 29"><rect x="0.600" y="0.600" width="21.800" height="27.800" rx="1.500" fill="#dcecf8" stroke="#7aa4cc" stroke-width="1.200"/><rect x="2.800" y="3" width="17.400" height="7.500" fill="#f4f8fc" stroke="#88a8c8" stroke-width="0.800"/><rect x="2.800" y="3" width="17.400" height="2" fill="#e8a040"/><text x="17.500" y="9.800" font-family="Liberation Mono" font-size="7" fill="#445">0</text><rect x="3.0" y="12.5" width="3.300" height="2.700" fill="#fafcfe" stroke="#88a8c8" stroke-width="0.500"/><rect x="7.4" y="12.5" width="3.300" height="2.700" fill="#fafcfe" stroke="#88a8c8" stroke-width="0.500"/><rect x="11.8" y="12.5" width="3.300" height="2.700" fill="#fafcfe" stroke="#88a8c8" stroke-width="0.500"/><rect x="16.2" y="12.5" width="3.300" height="2.700" fill="#fafcfe" stroke="#88a8c8" stroke-width="0.500"/><rect x="3.0" y="16.3" width="3.300" height="2.700" fill="#fafcfe" stroke="#88a8c8" stroke-width="0.500"/><rect x="7.4" y="16.3" width="3.300" height="2.700" fill="#fafcfe" stroke="#88a8c8" stroke-width="0.500"/><rect x="11.8" y="16.3" width="3.300" height="2.700" fill="#fafcfe" stroke="#88a8c8" stroke-width="0.500"/><rect x="16.2" y="16.3" width="3.300" height="2.700" fill="#fafcfe" stroke="#88a8c8" stroke-width="0.500"/><rect x="3.0" y="20.1" width="3.300" height="2.700" fill="#fafcfe" stroke="#88a8c8" stroke-width="0.500"/><rect x="7.4" y="20.1" width="3.300" height="2.700" fill="#fafcfe" stroke="#88a8c8" stroke-width="0.500"/><rect x="11.8" y="20.1" width="3.300" height="2.700" fill="#fafcfe" stroke="#88a8c8" stroke-width="0.500"/><rect x="16.2" y="20.1" width="3.300" height="2.700" fill="#e88820" stroke="#88a8c8" stroke-width="0.500"/><rect x="3.0" y="23.9" width="3.300" height="2.700" fill="#fafcfe" stroke="#88a8c8" stroke-width="0.500"/><rect x="7.4" y="23.9" width="3.300" height="2.700" fill="#fafcfe" stroke="#88a8c8" stroke-width="0.500"/><rect x="11.8" y="23.9" width="3.300" height="2.700" fill="#fafcfe" stroke="#88a8c8" stroke-width="0.500"/><rect x="16.2" y="23.9" width="3.300" height="2.700" fill="#e88820" stroke="#88a8c8" stroke-width="0.500"/></svg>
<svg class="a" style="left:561px;top:733px" width="30" height="30" viewBox="0 0 30 30"><rect x="13" y="4" width="17" height="22" fill="#fff" stroke="#1e7145" stroke-width="1.300"/><path d="M19.500 7.500H28M19.500 11H28M19.500 14.500H28M19.500 18H28M19.500 21.500H28M23.500 5V25" stroke="#1e7145" stroke-width="1.600"/><path d="M0 3.200L18 0V30L0 26.800Z" fill="#1e7145"/><path d="M5.500 10.500L12 19.800M12 10.500L5.500 19.800" stroke="#fff" stroke-width="2.300"/></svg>
<svg class="a" style="left:624px;top:732px" width="30" height="30" viewBox="0 0 30 30"><defs><linearGradient id="gFFb" x1="0.2" y1="0" x2="0.6" y2="1"><stop offset="0" stop-color="#4cc0f4"/><stop offset="0.500" stop-color="#1c78d0"/><stop offset="1" stop-color="#0c3488"/></linearGradient><linearGradient id="gFFo" x1="0.3" y1="0" x2="0.5" y2="1"><stop offset="0" stop-color="#f89a20"/><stop offset="0.600" stop-color="#ec6a18"/><stop offset="1" stop-color="#d84c14"/></linearGradient></defs><circle cx="16.500" cy="13.500" r="12.300" fill="url(#gFFb)"/><path d="M24.500 3.500A14.800 14.800 0 0 1 29.300 20L27.800 15.500A12 12 0 0 0 23 4.500Z" fill="#fce048"/><path d="M5.500 3.700A14.800 14.800 0 1 0 29.700 13L28.300 15.500A11.800 11.800 0 0 1 13 24.500C8 22 5.500 17 6 12C6.300 9 7 7 8.500 5.500Z" fill="url(#gFFo)"/><path d="M3.500 7.500L5.500 2.500L9 6L9.300 4.300L12 8Q14.500 8 15.500 10L13 11.500L14.800 13L11.500 14.500Q12 17.500 15 18.500Q18 19.300 21.500 17Q19 22 13 22.500Q6 20 5 12Z" fill="url(#gFFo)"/><path d="M29.200 19.500A14.800 14.800 0 0 0 29.700 13L28.300 15.500A11.800 11.800 0 0 1 25 22Z" fill="#f8b030"/></svg>
<svg class="a" style="left:686px;top:733px" width="30" height="30" viewBox="0 0 30 30"><rect width="30" height="30" fill="#dc4a26"/><circle cx="15" cy="15" r="10.500" fill="none" stroke="#fff" stroke-width="2.200"/><path d="M11.300 12.200C11.300 9.500 13 8.300 15.200 8.300C17.500 8.300 19 9.700 19 11.600C19 14.400 15.300 14.400 15.300 17.600" stroke="#fff" stroke-width="2.400" fill="none"/><circle cx="15.300" cy="21" r="1.500" fill="#fff"/></svg>
<svg class="a" style="left:748px;top:733px" width="30" height="30" viewBox="0 0 30 30"><rect x="14" y="9" width="16" height="13" fill="#fff" stroke="#0a6ccc" stroke-width="1.300"/><path d="M14.500 9.800L22 17L29.500 9.800" stroke="#0a6ccc" stroke-width="2.200" fill="none"/><path d="M0 3.200L18 0V30L0 26.800Z" fill="#0a6ccc"/><ellipse cx="9" cy="15" rx="3.600" ry="5" fill="none" stroke="#fff" stroke-width="2.600"/></svg>
<svg class="a" style="left:808px;top:731px" width="34" height="32" viewBox="0 0 32 30"><path d="M7 0.800H24A2 2 0 0 1 26 2.800V20L8 22Z" fill="#b4c0a8" stroke="#98a48c" stroke-width="0.800"/><path d="M0.800 8.500Q3.500 3 9 1.500L31 7.500L27.500 29.500L3.500 26Z" fill="#f2f4ec" stroke="#c4c8b4" stroke-width="0.800"/><path d="M0.800 8.500Q3.500 3 9 1.500L9.500 3Q5 4.500 2.500 9Z" fill="#5a7a4a"/><path d="M8.500 10.800L22.500 12.600L22 16.400L18.500 16L18.800 13.800L10 15Z" fill="#1c3c24"/><path d="M14 17.200L28.800 19.200L28.200 23.400L24.500 23L24.800 20.600L15.500 22Z" fill="#1c3c24"/><path d="M21 14V18.500" stroke="#1c3c24" stroke-width="1.300" fill="none"/></svg>
<svg class="a" style="left:871px;top:732px" width="32" height="32" viewBox="0 0 32 32"><rect x="0.800" y="0.800" width="30.400" height="30.400" rx="5" fill="none" stroke="#b42446" stroke-width="1.300"/><path d="M7 10.500H15" stroke="#5a2a2a" stroke-width="2.200"/><path d="M15.500 10.500H21" stroke="#b42446" stroke-width="2.200"/><path d="M17.500 7L21 5.500L24.500 7L21 8.500Z" fill="#b42446"/></svg>
<div class="t" style="left:876px;top:744px;font-size:16px;line-height:18px;color:#b42446;transform:scaleX(0.8835);transform-origin:0 0;">Pro</div>
<svg class="a" style="left:1078px;top:747px" width="9" height="5" viewBox="0 0 9 5"><path d="M0 5L4.500 0.300L9 5Z" fill="#fff" opacity="0.950"/></svg>
<svg class="a" style="left:1099px;top:741px" width="17" height="16" viewBox="0 0 17 16"><rect x="2.500" y="0.300" width="4.600" height="3.800" fill="#dcdcdc" stroke="#777" stroke-width="0.600"/><path d="M1 4H8.600V10.500L6.800 13.500V15.500H3V13.500L1 10.500Z" fill="#808080" stroke="#505050" stroke-width="0.600"/><circle cx="10.800" cy="10.800" r="4.700" fill="#2cb02c" stroke="#187018" stroke-width="0.600"/><path d="M8.400 10.800L10.300 12.800L13.300 8.800" stroke="#fff" stroke-width="1.500" fill="none"/></svg>
<svg class="a" style="left:1123px;top:741px" width="16" height="16" viewBox="0 0 16 16"><circle cx="8" cy="8" r="7.300" fill="#e8eef4" stroke="#9aa8b4" stroke-width="0.900"/><path d="M3 4.500C6 1.500 10 2 12.500 4.500C11 4 9.500 4.500 9 6C11.500 6.500 13.500 8.500 12 12.500C11 10.500 9.500 9 7.500 8.500C5.500 8 4 6.500 3 4.500Z" fill="#2070c0"/><path d="M2.500 5C5 2 9 1.800 11 3" stroke="#2c9c4c" stroke-width="1.400" fill="none"/></svg>
<svg class="a" style="left:1148px;top:741px" width="15" height="16" viewBox="0 0 15 16"><path d="M1 5.500H3.800L7.800 1.200V14.800L3.800 10.500H1Z" fill="#d8c9a4" stroke="#fff" stroke-width="1.300" stroke-linejoin="round"/><path d="M10.300 4.800Q12.600 8 10.300 11.200" stroke="#fff" stroke-width="1.200" fill="none"/></svg>
<svg class="a" style="left:1171px;top:741px" width="17" height="16" viewBox="0 0 17 16"><rect x="0.600" y="0.600" width="2" height="14.800" fill="none" stroke="#fff" stroke-width="1.100"/><path d="M2.800 1.500H8.500C10 1.500 10.500 3.200 12 3.200H16C15 5.500 13.500 7.500 11 7.500C9 7.500 8.500 8.800 7 8.800H2.800Z" fill="#fff"/></svg>
<svg class="a" style="left:1195px;top:743px" width="17" height="13" viewBox="0 0 17 13"><path d="M0.500 9.500H3V12H0.500ZM3.800 7.500H6.300V12H3.800ZM7.100 5.500H9.600V12H7.100ZM10.400 3H12.900V12H10.400ZM13.700 0.500H16.200V12H13.700Z" fill="#fff"/></svg>
<svg class="a" style="left:1219px;top:741px" width="18" height="16" viewBox="0 0 18 16"><rect x="8" y="2.600" width="8.600" height="12.600" rx="0.800" fill="none" stroke="#fff" stroke-width="1.400"/><rect x="10" y="0.600" width="4.600" height="2" fill="#fff"/><rect x="10" y="4.600" width="4.600" height="8.600" fill="#fff"/><path d="M1.800 0.500V4.500M5 0.500V4.500" stroke="#fff" stroke-width="1.400"/><path d="M0.400 4.500H6.400V8L4.800 9.600H2L0.400 8Z" fill="#fff"/><path d="M3.400 9.600V15.500" stroke="#fff" stroke-width="1.500"/></svg>
<div class="t" style="left:1251px;top:742px;font-size:11px;line-height:13px;color:#fff;transform:scaleX(0.8632);transform-origin:0 0;">ESP</div>
<div class="t" style="left:1303px;top:734px;font-size:12px;line-height:15px;color:#fff;transform:scaleX(0.9990);transform-origin:0 0;">22:02</div>
<div class="t" style="left:1289px;top:751px;font-size:12px;line-height:15px;color:#fff;transform:scaleX(0.9802);transform-origin:0 0;">09/11/2019</div>
<!-- icons -->
<svg width="0" height="0" style="position:absolute"><defs><linearGradient id="gP" x1="0" y1="0" x2="1" y2="1"><stop offset="0" stop-color="#c4601c"/><stop offset="0.45" stop-color="#8a2a12"/><stop offset="1" stop-color="#d8741c"/></linearGradient><linearGradient id="gBlue" x1="0" y1="0" x2="1" y2="1"><stop offset="0" stop-color="#c2e2f4"/><stop offset="1" stop-color="#7cbfe2"/></linearGradient><linearGradient id="gPink" x1="0" y1="0" x2="0" y2="1"><stop offset="0" stop-color="#f26a7c"/><stop offset="1" stop-color="#f7c4cc"/></linearGradient><linearGradient id="gFold" x1="0" y1="0" x2="0" y2="1"><stop offset="0" stop-color="#e8f1f8"/><stop offset="1" stop-color="#8fb4d6"/></linearGradient><linearGradient id="gGray" x1="0" y1="0" x2="0" y2="1"><stop offset="0" stop-color="#f6f6f6"/><stop offset="1" stop-color="#cfcfcf"/></linearGradient><radialGradient id="gLens" cx="0.4" cy="0.35" r="0.7"><stop offset="0" stop-color="#e6f4ff"/><stop offset="1" stop-color="#5fa0d8"/></radialGradient><linearGradient id="gArrow" x1="0" y1="0" x2="0" y2="1"><stop offset="0" stop-color="#7fd0f8"/><stop offset="1" stop-color="#1c84cc"/></linearGradient><linearGradient id="gF" x1="0" y1="0" x2="1" y2="1"><stop offset="0" stop-color="#3a7ad0"/><stop offset="1" stop-color="#0a3c98"/></linearGradient></defs></svg>
<svg class="a" style="left:9px;top:50px" width="20" height="20" viewBox="0 0 20 20"><rect width="20" height="20" fill="url(#gP)"/><path d="M0 8C6 2 14 12 20 6M0 14C8 8 12 20 20 12" stroke="#e8a060" stroke-width="0.8" fill="none" opacity="0.7"/><circle cx="10" cy="10" r="6.5" fill="#5a2a18" opacity="0.55"/><path d="M7.6 14.4V5.6H10.8A2.6 2.6 0 0 1 10.8 10.8H7.6" stroke="#fff" stroke-width="1.8" fill="none"/></svg>
<div class="a" style="left:39px;top:45px;width:1px;height:29px;background:#8e8e8e;"></div><div class="a" style="left:40px;top:45px;width:1px;height:29px;background:#fbfbfb;"></div>
<div class="a" style="left:46px;top:45px;width:7px;height:29px;background:linear-gradient(90deg,#d9d9d9,#bdbdbd);"></div><div class="a" style="left:53px;top:45px;width:1px;height:29px;background:#8a8a8a;"></div><div class="a" style="left:48px;top:59px;width:3px;height:3px;background:#555;"></div><div class="a" style="left:49px;top:60px;width:1px;height:1px;background:#ccc;"></div>
<svg class="a" style="left:59px;top:51px" width="16" height="18" viewBox="0 0 16 18"><path d="M1 0.8H10.5L15.2 5.5V17.2H1Z" fill="#fbfbfb" stroke="#6a6a6a" stroke-width="1.3"/><path d="M3 3H10V6H13V15.2H3Z" fill="url(#gBlue)"/><path d="M10.5 0.8V5.5H15.2" fill="#fff" stroke="#6a6a6a" stroke-width="1.1"/></svg>
<svg class="a" style="left:86px;top:53px" width="18" height="14" viewBox="0 0 18 14"><path d="M1 12.5V1.2H6L7.5 2.8H14V6" fill="#fafafa" stroke="#6a6a6a" stroke-width="1.2"/><path d="M1 12.8L4.5 6H17.5L14 12.8Z" fill="url(#gFold)" stroke="#6a6a6a" stroke-width="1.2" stroke-linejoin="round"/></svg>
<svg class="a" style="left:112px;top:51px" width="18" height="18" viewBox="0 0 18 18"><path d="M1 2.2A1.4 1.4 0 0 1 2.4 0.8H15L17.2 3V15.8A1.4 1.4 0 0 1 15.8 17.2H2.4A1.4 1.4 0 0 1 1 15.8Z" fill="#f4f4f4" stroke="#707070" stroke-width="1.3"/><rect x="3.6" y="1.6" width="10.4" height="7.6" fill="url(#gPink)"/><rect x="4.2" y="11" width="9.8" height="6" fill="#8e8e8e"/><rect x="10.6" y="12.2" width="2" height="3.8" fill="#e8e8e8"/><rect x="14.8" y="1.8" width="1.4" height="1.6" fill="#555"/></svg>
<div class="a" style="left:137px;top:49px;width:1px;height:22px;background:#8e8e8e;"></div><div class="a" style="left:138px;top:49px;width:1px;height:22px;background:#fbfbfb;"></div>
<svg class="a" style="left:145px;top:52px" width="18" height="17" viewBox="0 0 18 17"><rect x="0.8" y="1" width="16.4" height="7" rx="1" fill="url(#gGray)" stroke="#6a6a6a" stroke-width="1.3"/><rect x="13.6" y="2.4" width="1.6" height="1.6" fill="#4fb44f"/><rect x="3.6" y="6.2" width="10.8" height="10" fill="#fdfdfd" stroke="#5a5a5a" stroke-width="1.3"/><rect x="5" y="8" width="8" height="6.8" fill="#e2f0e2"/><path d="M5.5 9.5H12M5.5 11.5H10M5.5 13.5H11" stroke="#5a5a5a" stroke-width="0.9"/></svg>
<svg class="a" style="left:172px;top:51px" width="18" height="19" viewBox="0 0 18 19"><rect x="0.6" y="0.6" width="11" height="13" fill="#f2f2f2" stroke="#b8b8b8" stroke-width="1"/><path d="M11.5 11.5L16.6 17.6" stroke="#2a2a2a" stroke-width="2.6" stroke-linecap="round"/><circle cx="8.6" cy="8" r="4.9" fill="url(#gLens)" stroke="#303030" stroke-width="1.6"/></svg>
<div class="a" style="left:197px;top:49px;width:1px;height:22px;background:#8e8e8e;"></div><div class="a" style="left:198px;top:49px;width:1px;height:22px;background:#fbfbfb;"></div>
<svg class="a" style="left:207px;top:51px" width="14" height="18" viewBox="0 0 14 18"><path d="M2.5 1L8.6 11.5M11.5 1L5.4 11.5" stroke="#a9a9a9" stroke-width="2" stroke-linecap="round"/><circle cx="3.4" cy="14" r="2.5" fill="none" stroke="#9d9d9d" stroke-width="1.5"/><circle cx="10.6" cy="14" r="2.5" fill="none" stroke="#9d9d9d" stroke-width="1.5"/></svg>
<svg class="a" style="left:232px;top:51px" width="18" height="18" viewBox="0 0 18 18"><path d="M0.8 0.8H6.5L9.2 3.5V10.4H0.8Z" fill="#f6f6f6" stroke="#555" stroke-width="1.2"/><path d="M2.2 3.5H6M2.2 5.3H7.8M2.2 7.1H7.8M2.2 8.8H7.8" stroke="#8a8a8a" stroke-width="0.8"/><path d="M8.8 6H14.4L17.2 8.8V17.2H8.8Z" fill="#f6f6f6" stroke="#555" stroke-width="1.2"/><path d="M10.2 9H14M10.2 10.8H15.8M10.2 12.6H15.8M10.2 14.4H15.8M10.2 16H15.8" stroke="#8a8a8a" stroke-width="0.8"/></svg>
<svg class="a" style="left:260px;top:50px" width="17" height="19" viewBox="0 0 17 19"><rect x="0.8" y="3.4" width="15.4" height="14.8" rx="1" fill="#e4e4e4" stroke="#b4b4b4" stroke-width="1.3"/><rect x="3" y="6" width="11" height="10.6" fill="#fbfbfb" stroke="#c8c8c8" stroke-width="0.8"/><path d="M5 1H12V5H5Z" fill="#efefef" stroke="#b4b4b4" stroke-width="1.2"/><path d="M4.6 9H10M4.6 11H8.5M4.6 13H10" stroke="#c4c4c4" stroke-width="0.9"/></svg>
<div class="a" style="left:284px;top:49px;width:1px;height:22px;background:#8e8e8e;"></div><div class="a" style="left:285px;top:49px;width:1px;height:22px;background:#fbfbfb;"></div>
<svg class="a" style="left:293px;top:53px" width="16" height="15" viewBox="0 0 16 15"><path d="M0.6 5.2L8.2 0.6V3.4C13.8 3.4 15.6 8 15 10.6C14.2 13.4 11.4 14.6 7.4 14.4C10.6 13.4 11.6 11.6 11 9.8C10.6 8.6 9.8 7.8 8.2 7.6V10.2Z" fill="#b2b2b2" stroke="#a2a2a2" stroke-width="0.5"/></svg>
<div class="a" style="left:317px;top:49px;width:1px;height:22px;background:#8e8e8e;"></div><div class="a" style="left:318px;top:49px;width:1px;height:22px;background:#fbfbfb;"></div>
<svg class="a" style="left:324px;top:50px" width="20" height="20" viewBox="0 0 20 20"><circle cx="10" cy="10" r="4.4" fill="#f3dfe4"/><circle cx="10" cy="10" r="5.8" fill="none" stroke="#2f8fc4" stroke-width="1.9"/><path d="M10 0.4V19.6M0.4 10H19.6" stroke="#2f8fc4" stroke-width="1.7"/></svg>
<svg class="a" style="left:351px;top:51px" width="20" height="19" viewBox="0 0 20 19"><path d="M0.8 10.5V0.8H11" fill="none" stroke="#555" stroke-width="1.5" stroke-dasharray="1.4 1.2"/><path d="M0.8 10.5H5" stroke="#555" stroke-width="1.5" stroke-dasharray="1.4 1.2"/><path d="M13.6 12.4L19 18" stroke="#2a2a2a" stroke-width="2.6" stroke-linecap="round"/><circle cx="10.6" cy="8.8" r="4.6" fill="url(#gLens)" stroke="#303030" stroke-width="1.6"/></svg>
<div class="a" style="left:377px;top:49px;width:1px;height:22px;background:#8e8e8e;"></div><div class="a" style="left:378px;top:49px;width:1px;height:22px;background:#fbfbfb;"></div>
<div class="a" style="left:381px;top:50px;width:175px;height:21px;box-sizing:border-box;background:#fff;border:1px solid #848484;border-right-color:#e4e4e4;border-bottom-color:#e4e4e4;box-shadow:inset 1px 1px 0 #4a4a4a"></div>
<svg class="a" style="left:386px;top:54px" width="13" height="13" viewBox="0 0 13 13"><rect width="13" height="13" fill="url(#gF)"/><path d="M3.2 11C4.8 11.4 5.4 10 5.8 8L6.8 3.6C7.2 2 8.4 1.6 9.8 2.2M4.2 6H8.6" stroke="#fff" stroke-width="1.2" fill="none"/></svg>
<div class="t" style="left:402px;top:53px;font-size:12px;line-height:15px;color:#000;transform:scaleX(0.8968);transform-origin:0 0;">Cycle SAR 3</div>
<div class="a" style="left:538px;top:52px;width:16px;height:17px;box-sizing:border-box;background:#eaeaea;border:1px solid #fff;border-right-color:#6e6e6e;border-bottom-color:#6e6e6e"></div>
<svg class="a" style="left:542px;top:58px" width="8" height="5" viewBox="0 0 8 5"><path d="M0 0H8L4 4.5Z" fill="#000"/></svg>
<div class="a" style="left:559px;top:49px;width:1px;height:22px;background:#8e8e8e;"></div><div class="a" style="left:560px;top:49px;width:1px;height:22px;background:#fbfbfb;"></div>
<svg class="a" style="left:567px;top:50px" width="18" height="18" viewBox="0 0 18 18"><ellipse cx="9" cy="11.4" rx="4.6" ry="5.8" fill="#f6d9d6" stroke="#555" stroke-width="0.8"/><path d="M3.8 7.8C3.8 2.6 6 1 9 1S14.2 2.6 14.2 7.8Z" fill="#2c2c2c"/><ellipse cx="9" cy="8" rx="8.6" ry="1.7" fill="#3a3a3a"/><rect x="4" y="5.6" width="10" height="1.2" fill="#777"/><circle cx="7" cy="10.8" r="0.9" fill="#3c7cc4"/><circle cx="11" cy="10.8" r="0.9" fill="#3c7cc4"/><path d="M9 11.5V13.6H8.2M7.4 15.2Q9 16 10.6 15.2" stroke="#6a3a3a" stroke-width="0.7" fill="none"/></svg>
<svg class="a" style="left:593px;top:50px" width="20" height="20" viewBox="0 0 20 20"><path d="M17.200 4.200C17 1.600 13.600 1 12.200 4.200L8 16.500C7.200 18.800 5 19.600 2.800 18.200" stroke="#c8387c" stroke-width="2.100" fill="none" stroke-linecap="round"/><path d="M7 8.200H15.200" stroke="#c8387c" stroke-width="1.700"/></svg>
<div class="t" style="left:603px;top:59px;font-family:'Liberation Serif',serif;font-size:8px;line-height:10px;color:#c8387c;font-weight:bold">(x)</div>
<div class="t" style="left:625px;top:48px;font-family:'Liberation Serif',serif;font-size:22px;line-height:24px;color:#2a7a2e;font-weight:bold;transform:scaleX(0.92);transform-origin:0 0">$</div>
<svg class="a" style="left:648px;top:51px" width="19" height="17" viewBox="0 0 19 17"><rect x="2.6" y="0.4" width="3.2" height="3" fill="#e6b820"/><rect x="12.6" y="0.4" width="3.2" height="3" fill="#e6b820"/><path d="M2 3.2H6.8L8 14H0.6Z" fill="#8a8a8a" stroke="#444" stroke-width="0.7"/><path d="M12 3.2H16.8L18.4 14H11Z" fill="#8a8a8a" stroke="#444" stroke-width="0.7"/><rect x="6.6" y="4.6" width="5.8" height="6" fill="#3c3c3c"/><rect x="7.6" y="6.6" width="1" height="1" fill="#e6b820"/><rect x="9.2" y="6.6" width="1" height="1" fill="#e6b820"/><rect x="10.8" y="6.6" width="1" height="1" fill="#e6b820"/><rect x="0.6" y="14" width="7" height="2.6" fill="#e6b820" stroke="#7a6410" stroke-width="0.5"/><rect x="11.2" y="14" width="7" height="2.6" fill="#e6b820" stroke="#7a6410" stroke-width="0.5"/></svg>
<svg class="a" style="left:674px;top:55px" width="21" height="10" viewBox="0 0 21 10"><path d="M0.6 2.4V7.6M2.6 2.4V7.6M4.6 2.4V7.6" stroke="#2c94dc" stroke-width="1"/><path d="M6 2.4H12.5V0L20.6 5L12.5 10V7.6H6Z" fill="url(#gArrow)"/></svg>
<svg class="a" style="left:701px;top:54px" width="9" height="12" viewBox="0 0 9 12"><path d="M0.8 0.8V9.6L3.2 7.6L5 11.4L6.8 10.6L5 6.8H8Z" fill="#d8d8d8" stroke="#444" stroke-width="1"/></svg>
<div class="t" style="left:709px;top:47px;font-size:20px;line-height:24px;color:#2c8a2c;font-weight:bold;transform:scaleX(0.95);transform-origin:0 0">?</div>
<div class="a" style="left:731px;top:45px;width:1px;height:29px;background:#8e8e8e;"></div><div class="a" style="left:732px;top:45px;width:1px;height:29px;background:#fbfbfb;"></div>
<div class="a" style="left:737px;top:45px;width:7px;height:29px;background:linear-gradient(90deg,#d9d9d9,#bdbdbd);"></div><div class="a" style="left:744px;top:45px;width:1px;height:29px;background:#8a8a8a;"></div><div class="a" style="left:739px;top:59px;width:3px;height:3px;background:#555;"></div><div class="a" style="left:740px;top:60px;width:1px;height:1px;background:#ccc;"></div>
<svg class="a" style="left:749px;top:50px" width="19" height="20" viewBox="0 0 19 20"><g opacity="0.55"><rect x="0.5" y="0.5" width="11" height="8" rx="0.8" fill="#ececec" stroke="#7d7d7d" stroke-width="1"/><path d="M1.0 2.7H11.0" stroke="#b0b0b0" stroke-width="0.9"/></g><g opacity="0.8"><rect x="3.5" y="5.2" width="11" height="8" rx="0.8" fill="#ececec" stroke="#7d7d7d" stroke-width="1"/><path d="M4.0 7.4H14.0" stroke="#b0b0b0" stroke-width="0.9"/></g><rect x="6.5" y="9.6" width="12" height="9.6" rx="0.8" fill="#ececec" stroke="#7d7d7d" stroke-width="1"/><path d="M7.0 11.8H18.0" stroke="#b0b0b0" stroke-width="0.9"/><path d="M8.5 17.5L10.9 14.8L12.9 16.6L14.9 13L16.5 15.2" stroke="#8a8a8a" stroke-width="0.9" fill="none"/></svg>
<svg class="a" style="left:776px;top:50px" width="20" height="20" viewBox="0 0 20 20"><rect x="0.5" y="0.8" width="9.5" height="18.4" rx="0.8" fill="#ececec" stroke="#7d7d7d" stroke-width="1"/><path d="M1.0 3.0H9.5" stroke="#b0b0b0" stroke-width="0.9"/><path d="M1.5 15L3.8 11.4L5.6 13.8L7.5 9L9.0 12.0" stroke="#8a8a8a" stroke-width="0.9" fill="none"/><rect x="10" y="0.8" width="9.5" height="18.4" rx="0.8" fill="#ececec" stroke="#7d7d7d" stroke-width="1"/><path d="M10.5 3.0H19.0" stroke="#b0b0b0" stroke-width="0.9"/><path d="M11 15L13.2 11.4L15.1 13.8L17.0 9L18.5 12.0" stroke="#8a8a8a" stroke-width="0.9" fill="none"/></svg>
<svg class="a" style="left:803px;top:50px" width="20" height="20" viewBox="0 0 20 20"><rect x="0.5" y="0.8" width="19" height="9.2" rx="0.8" fill="#ececec" stroke="#7d7d7d" stroke-width="1"/><path d="M1.0 3.0H19.0" stroke="#b0b0b0" stroke-width="0.9"/><path d="M3 8.2L7.2 5.8L10.7 7.4L14.2 4.2L17 6.2" stroke="#8a8a8a" stroke-width="0.9" fill="none"/><rect x="0.5" y="10" width="19" height="9.2" rx="0.8" fill="#ececec" stroke="#7d7d7d" stroke-width="1"/><path d="M1.0 12.2H19.0" stroke="#b0b0b0" stroke-width="0.9"/><path d="M3 17.4L7.2 15.0L10.7 16.6L14.2 13.4L17 15.4" stroke="#8a8a8a" stroke-width="0.9" fill="none"/></svg>
<svg class="a" style="left:830px;top:52px" width="20" height="16" viewBox="0 0 20 16"><rect x="0.5" y="0.5" width="9.5" height="7.5" rx="0.8" fill="#ececec" stroke="#7d7d7d" stroke-width="1"/><path d="M1.0 2.7H9.5" stroke="#b0b0b0" stroke-width="0.9"/><path d="M2 6.6L4.0 4.6L5.6 5.9L7.2 3.2L8.5 4.9" stroke="#8a8a8a" stroke-width="0.9" fill="none"/><rect x="10" y="0.5" width="9.5" height="7.5" rx="0.8" fill="#ececec" stroke="#7d7d7d" stroke-width="1"/><path d="M10.5 2.7H19.0" stroke="#b0b0b0" stroke-width="0.9"/><path d="M11.5 6.6L13.4 4.6L15.1 5.9L16.7 3.2L18.0 4.9" stroke="#8a8a8a" stroke-width="0.9" fill="none"/><rect x="0.5" y="8" width="9.5" height="7.5" rx="0.8" fill="#ececec" stroke="#7d7d7d" stroke-width="1"/><path d="M1.0 10.2H9.5" stroke="#b0b0b0" stroke-width="0.9"/><path d="M2 14.200000000000001L4.0 12.2L5.6 13.5L7.2 10.8L8.5 12.5" stroke="#8a8a8a" stroke-width="0.9" fill="none"/><rect x="10" y="8" width="9.5" height="7.5" rx="0.8" fill="#ececec" stroke="#7d7d7d" stroke-width="1"/><path d="M10.5 10.2H19.0" stroke="#b0b0b0" stroke-width="0.9"/><path d="M11.5 14.200000000000001L13.4 12.2L15.1 13.5L16.7 10.8L18.0 12.5" stroke="#8a8a8a" stroke-width="0.9" fill="none"/></svg>
<svg class="a" style="left:857px;top:52px" width="20" height="16" viewBox="0 0 20 16"><rect x="0.5" y="0.5" width="19" height="15" fill="#efefef" stroke="#7d7d7d" stroke-width="1"/><path d="M1 5L4 3L6 6M14 10L17 6L19 9M1 12L4 10" stroke="#a8a8a8" stroke-width="0.8" fill="none"/><g transform="translate(10 8)"><circle r="3.9" fill="none" stroke="#4a4a4a" stroke-width="2.4"/><rect x="-1.1" y="-6.6" width="2.2" height="2.6" fill="#4a4a4a" transform="rotate(0)"/><rect x="-1.1" y="-6.6" width="2.2" height="2.6" fill="#4a4a4a" transform="rotate(45)"/><rect x="-1.1" y="-6.6" width="2.2" height="2.6" fill="#4a4a4a" transform="rotate(90)"/><rect x="-1.1" y="-6.6" width="2.2" height="2.6" fill="#4a4a4a" transform="rotate(135)"/><rect x="-1.1" y="-6.6" width="2.2" height="2.6" fill="#4a4a4a" transform="rotate(180)"/><rect x="-1.1" y="-6.6" width="2.2" height="2.6" fill="#4a4a4a" transform="rotate(225)"/><rect x="-1.1" y="-6.6" width="2.2" height="2.6" fill="#4a4a4a" transform="rotate(270)"/><rect x="-1.1" y="-6.6" width="2.2" height="2.6" fill="#4a4a4a" transform="rotate(315)"/><circle r="1.6" fill="#efefef"/></g></svg>
<div class="a" style="left:887px;top:45px;width:1px;height:29px;background:#8e8e8e;"></div><div class="a" style="left:888px;top:45px;width:1px;height:29px;background:#fbfbfb;"></div>
</body></html>
